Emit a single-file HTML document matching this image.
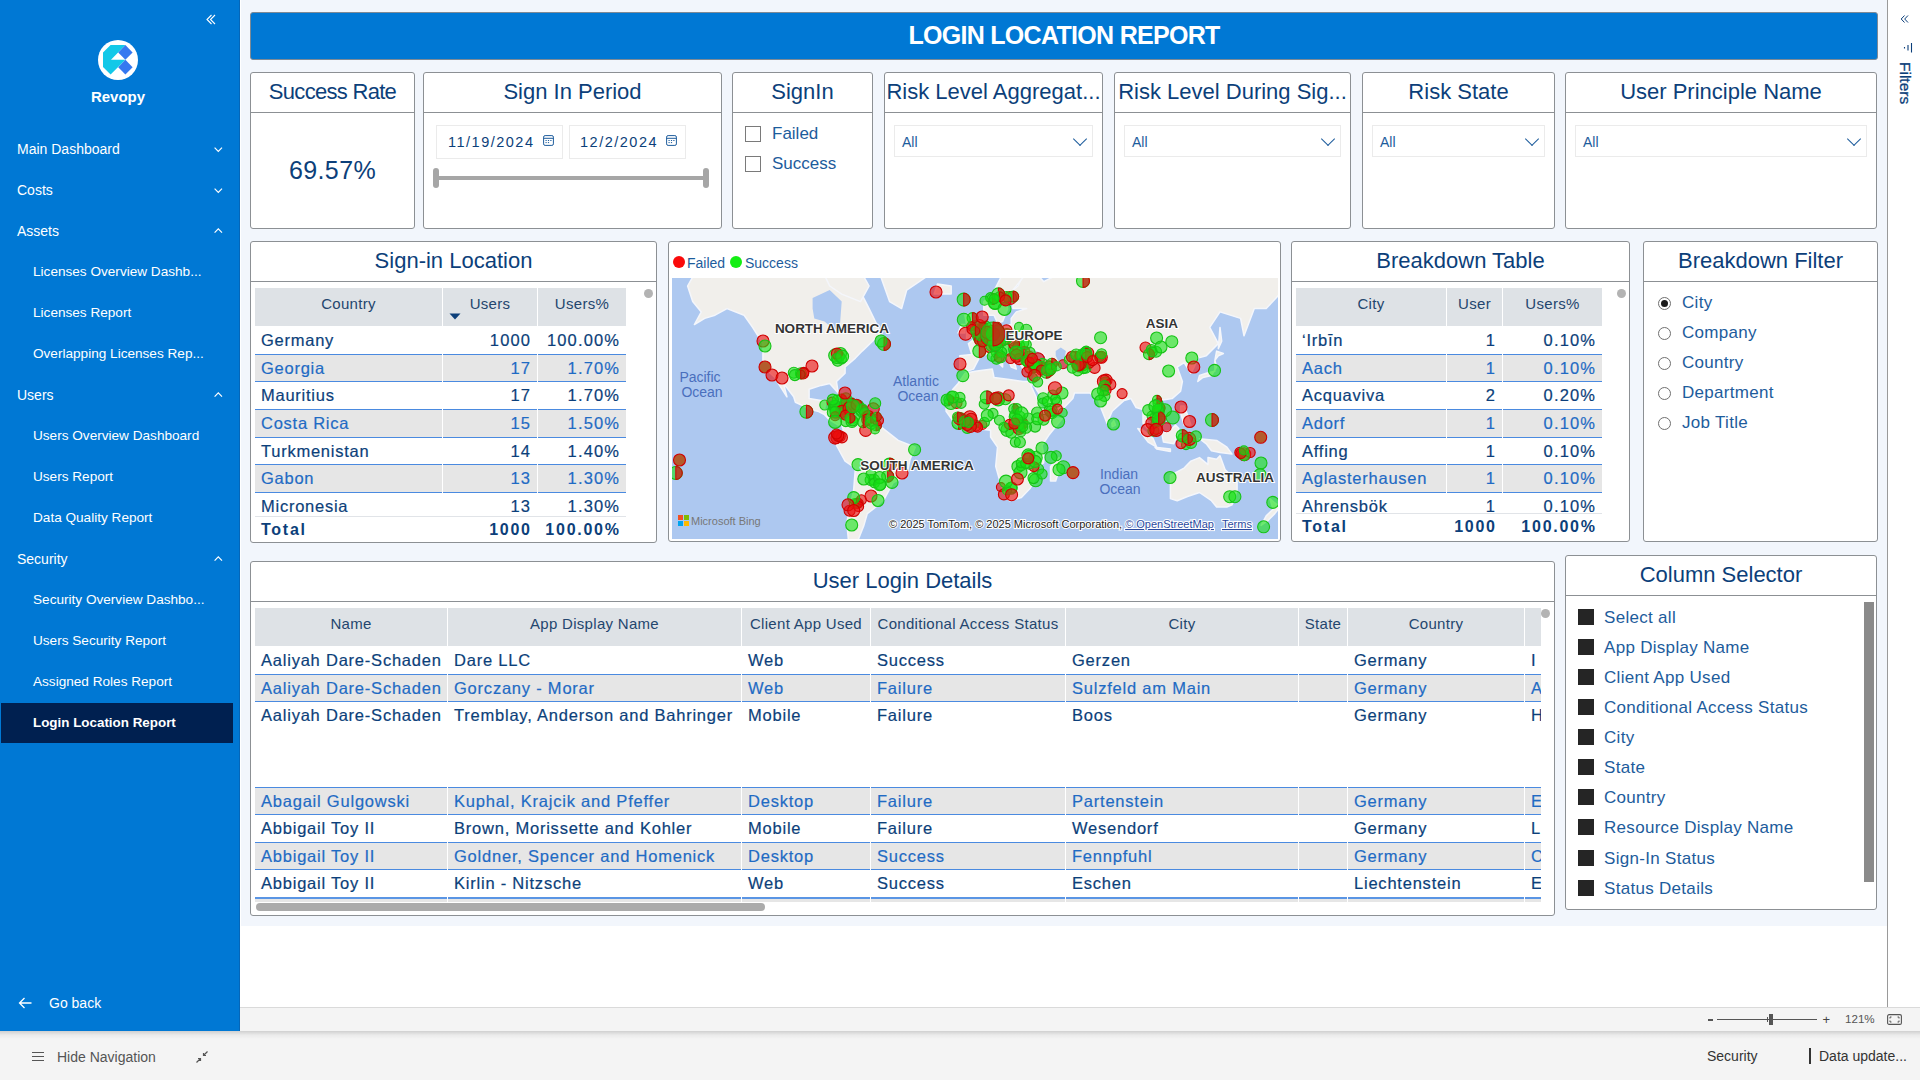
<!DOCTYPE html>
<html><head><meta charset="utf-8"><title>Login Location Report</title>
<style>
*{margin:0;padding:0;box-sizing:border-box}
html,body{width:1920px;height:1080px;overflow:hidden;background:#fff;font-family:"Liberation Sans",sans-serif}
.abs{position:absolute}
#side{position:absolute;left:0;top:0;width:240px;height:1031px;background:#0078d4;border-right:1px solid #0566b8}
.nav{position:absolute;left:17px;color:#fff;font-size:14px;line-height:20px;white-space:nowrap}
.nav.sub{left:33px;font-size:13.6px}
.chev{position:absolute;left:212px;width:7px;height:7px;border-right:1.4px solid #fff;border-bottom:1.4px solid #fff}
.chev.dn{transform:rotate(45deg)}
.chev.up{transform:rotate(-135deg)}
#canvas{position:absolute;left:241px;top:0;width:1646px;height:926px;background:#f2f6fc}
.card{position:absolute;background:#fff;border:1px solid #8c9094;border-radius:3px;overflow:hidden}
.ttl{position:absolute;left:0;right:0;text-align:center;color:#0c3f7a;font-size:22px;white-space:nowrap;border-bottom:1px solid #8c9094}
.tx{position:absolute;white-space:nowrap}
.tb{-webkit-text-stroke:0.2px currentColor}
.dd{position:absolute;border:1px solid #ebebeb;background:#fff}
.dd span{position:absolute;left:7px;top:8px;font-size:14px;color:#1d5c9c}
.ddc{position:absolute;width:10px;height:10px;border-right:1.3px solid #1d5c9c;border-bottom:1.3px solid #1d5c9c;transform:rotate(45deg)}
</style></head>
<body>
<div class="abs" style="left:240px;top:1007px;width:1680px;height:24px;background:#f4f4f4;border-top:1px solid #dadada"></div>
<div class="abs" style="left:0;top:1031px;width:1920px;height:49px;background:#f4f4f4"></div>
<div class="abs" style="left:0;top:1031px;width:1920px;height:8px;background:linear-gradient(rgba(0,0,0,0.15),rgba(0,0,0,0.04) 50%,rgba(0,0,0,0))"></div>
<div class="abs" style="left:1887px;top:0;width:1px;height:1007px;background:#9a9a9a"></div>
<svg class="abs" style="left:1900px;top:14px" width="9" height="10" viewBox="0 0 9 10"><path d="M4.5 1.5 L1.2 5 L4.5 8.5 M8 1.5 L4.7 5 L8 8.5" stroke="#0c3f7a" stroke-width="1" fill="none"/></svg>
<svg class="abs" style="left:1902px;top:42px" width="11" height="11" viewBox="0 0 11 11"><path d="M9.5 1 V10.5 M6 3 V8.5 M2.5 5 V6.5" stroke="#0c3f7a" stroke-width="1.1" fill="none"/></svg>
<div class="tx" style="left:1891.5px;top:62px;width:22px;height:50px;color:#0c3f7a;font-size:15.5px;writing-mode:vertical-rl;-webkit-text-stroke:0.3px #0c3f7a">Filters</div>
<div class="abs" style="left:1708px;top:1019px;width:5px;height:2px;background:#555"></div>
<div class="abs" style="left:1717px;top:1019px;width:100px;height:1px;background:#555"></div>
<div class="abs" style="left:1769px;top:1014px;width:4px;height:11px;background:#555"></div>
<div class="abs" style="left:1767px;top:1017px;width:1px;height:5px;background:#555"></div>
<div class="tx" style="left:1822.5px;top:1011.5px;font-size:13px;color:#444">+</div>
<div class="tx" style="left:1845px;top:1012px;font-size:11.6px;color:#555">121%</div>
<svg class="abs" style="left:1887px;top:1014px" width="15" height="11" viewBox="0 0 15 11"><rect x="0.6" y="0.6" width="13.8" height="9.8" rx="1.5" fill="none" stroke="#555" stroke-width="1.1"/><path d="M4.5 3 H3 V4.5 M10.5 3 H12 V4.5 M3 6.5 V8 H4.5 M12 6.5 V8 H10.5" stroke="#555" stroke-width="1" fill="none"/></svg>
<svg class="abs" style="left:31px;top:1051px" width="14" height="12" viewBox="0 0 14 12"><path d="M1 1.5 H13 M1 5.5 H13 M1 9.5 H13" stroke="#555" stroke-width="1"/></svg>
<div class="tx" style="left:57px;top:1049px;font-size:14px;color:#555">Hide Navigation</div>
<svg class="abs" style="left:195px;top:1050px" width="14" height="14" viewBox="0 0 14 14"><path d="M1.5 12.5 L5.5 8.5 M3 8.5 H5.5 V11 M12.5 1.5 L8.5 5.5 M8.5 3 V5.5 H11" stroke="#555" stroke-width="1.2" fill="none"/></svg>
<div class="tx" style="left:1707px;top:1048px;font-size:14px;color:#333">Security</div>
<div class="abs" style="left:1809px;top:1048px;width:1.5px;height:16px;background:#333"></div>
<div class="tx" style="left:1819px;top:1048px;font-size:14px;color:#333">Data update...</div>
<div id="canvas"></div>
<div id="side">
<svg class="abs" style="left:206px;top:14px" width="12" height="12" viewBox="0 0 12 12"><path d="M5.5 1 L1 5.5 L5.5 10 M9 1 L4.5 5.5 L9 10" stroke="#fff" stroke-width="1.1" fill="none"/></svg>
<svg class="abs" style="left:93px;top:35px" width="50" height="50" viewBox="0 0 50 50">
<circle cx="25" cy="25" r="20" fill="#fff"/>
<path d="M17.6 10 H32.4 L18 24.8 H32.4 L17.6 39.4 L10 31.9 V17.4 Z" fill="#12c8e8"/>
<path d="M32.4 10 L39.6 17.4 L32.4 24.8 L25.2 17.6 Z" fill="#3578f0"/>
<path d="M32.4 24.8 L39.6 32.2 L32.4 39.4 L25.2 32.2 Z" fill="#3578f0"/>
</svg>
<div class="tx" style="left:0;width:236px;top:88px;text-align:center;color:#fff;font-weight:bold;font-size:15px">Revopy</div>
<div class="nav" style="top:139px;">Main Dashboard</div>
<svg class="abs" style="left:214px;top:147px" width="9" height="6" viewBox="0 0 9 6"><path d="M0.6 0.6 L4.3 4.3 L8 0.6" stroke="#fff" stroke-width="1.2" fill="none"/></svg>
<div class="nav" style="top:180px;">Costs</div>
<svg class="abs" style="left:214px;top:188px" width="9" height="6" viewBox="0 0 9 6"><path d="M0.6 0.6 L4.3 4.3 L8 0.6" stroke="#fff" stroke-width="1.2" fill="none"/></svg>
<div class="nav" style="top:221px;">Assets</div>
<svg class="abs" style="left:214px;top:228px" width="9" height="6" viewBox="0 0 9 6"><path d="M0.6 4.6 L4.3 0.9 L8 4.6" stroke="#fff" stroke-width="1.2" fill="none"/></svg>
<div class="nav sub" style="top:262px;">Licenses Overview Dashb...</div>
<div class="nav sub" style="top:303px;">Licenses Report</div>
<div class="nav sub" style="top:344px;">Overlapping Licenses Rep...</div>
<div class="nav" style="top:385px;">Users</div>
<svg class="abs" style="left:214px;top:392px" width="9" height="6" viewBox="0 0 9 6"><path d="M0.6 4.6 L4.3 0.9 L8 4.6" stroke="#fff" stroke-width="1.2" fill="none"/></svg>
<div class="nav sub" style="top:426px;">Users Overview Dashboard</div>
<div class="nav sub" style="top:467px;">Users Report</div>
<div class="nav sub" style="top:508px;">Data Quality Report</div>
<div class="nav" style="top:549px;">Security</div>
<svg class="abs" style="left:214px;top:556px" width="9" height="6" viewBox="0 0 9 6"><path d="M0.6 4.6 L4.3 0.9 L8 4.6" stroke="#fff" stroke-width="1.2" fill="none"/></svg>
<div class="nav sub" style="top:590px;">Security Overview Dashbo...</div>
<div class="nav sub" style="top:631px;">Users Security Report</div>
<div class="nav sub" style="top:672px;">Assigned Roles Report</div>
<div class="abs" style="left:1px;top:703px;width:232px;height:40px;background:#002050"></div>
<div class="nav sub" style="top:713px;font-weight:bold;font-size:13.4px;">Login Location Report</div>
<svg class="abs" style="left:18px;top:997px" width="14" height="12" viewBox="0 0 14 12"><path d="M13.5 6 H1.5 M6.5 1 L1.5 6 L6.5 11" stroke="#fff" stroke-width="1.3" fill="none"/></svg>
<div class="nav" style="left:49px;top:993px">Go back</div>
</div>
<div class="abs" style="left:250px;top:12px;width:1628px;height:48px;background:#0078d4;border:1px solid #7d8a96;border-radius:3px"></div>
<div class="tx" style="left:250px;width:1628px;top:19px;text-align:center;color:#fff;font-weight:bold;font-size:25px;line-height:32px;letter-spacing:-0.7px">LOGIN LOCATION REPORT</div>
<div class="card" style="left:250px;top:72px;width:165px;height:157px;"><div class="ttl" style="top:0;height:40px;line-height:38px;letter-spacing:-0.7px">Success Rate</div>
<div class="tx" style="left:0;right:0;top:82px;text-align:center;color:#0c3f7a;font-size:25px;line-height:30px;letter-spacing:0.4px">69.57%</div>
</div>
<div class="card" style="left:423px;top:72px;width:299px;height:157px;"><div class="ttl" style="top:0;height:40px;line-height:38px;">Sign In Period</div>
<div class="dd" style="left:12px;top:52px;width:127px;height:34px"><span style="left:11px;top:8px;font-size:14.5px;color:#0c3f7a;letter-spacing:1.5px">11/19/2024</span><svg class="abs" style="left:106px;top:9px" width="11" height="11" viewBox="0 0 11 11"><rect x="0.6" y="0.6" width="9.8" height="9.8" rx="1.5" fill="none" stroke="#1d5c9c" stroke-width="1"/><path d="M0.6 3.3 H10.4" stroke="#1d5c9c" stroke-width="1"/><path d="M2.5 5.5h1.2M4.9 5.5h1.2M7.3 5.5h1.2M2.5 7.6h1.2M4.9 7.6h1.2" stroke="#1d5c9c" stroke-width="1"/></svg></div>
<div class="dd" style="left:145px;top:52px;width:117px;height:34px"><span style="left:10px;top:8px;font-size:14.5px;color:#0c3f7a;letter-spacing:1.5px">12/2/2024</span><svg class="abs" style="left:96px;top:9px" width="11" height="11" viewBox="0 0 11 11"><rect x="0.6" y="0.6" width="9.8" height="9.8" rx="1.5" fill="none" stroke="#1d5c9c" stroke-width="1"/><path d="M0.6 3.3 H10.4" stroke="#1d5c9c" stroke-width="1"/><path d="M2.5 5.5h1.2M4.9 5.5h1.2M7.3 5.5h1.2M2.5 7.6h1.2M4.9 7.6h1.2" stroke="#1d5c9c" stroke-width="1"/></svg></div>
<div class="abs" style="left:12px;top:103px;width:272px;height:3.5px;background:#a6a6a6;border-radius:2px"></div>
<div class="abs" style="left:9px;top:95px;width:6px;height:20px;background:#a6a6a6;border-radius:3px"></div>
<div class="abs" style="left:279px;top:95px;width:6px;height:20px;background:#a6a6a6;border-radius:3px"></div>
</div>
<div class="card" style="left:732px;top:72px;width:141px;height:157px;"><div class="ttl" style="top:0;height:40px;line-height:38px;">SignIn</div>
<div class="abs" style="left:12px;top:53px;width:16px;height:16px;border:1px solid #7a7a7a"></div>
<div class="tx" style="left:39px;top:50px;font-size:17px;line-height:22px;color:#1d5c9c">Failed</div>
<div class="abs" style="left:12px;top:83px;width:16px;height:16px;border:1px solid #7a7a7a"></div>
<div class="tx" style="left:39px;top:80px;font-size:17px;line-height:22px;color:#1d5c9c">Success</div>
</div>
<div class="card" style="left:884px;top:72px;width:219px;height:157px;"><div class="ttl" style="top:0;height:40px;line-height:38px;">Risk Level Aggregat...</div>
<div class="dd" style="left:9px;top:52px;width:199px;height:32px"><span>All</span><div class="ddc" style="left:180px;top:8px"></div></div>
</div>
<div class="card" style="left:1114px;top:72px;width:237px;height:157px;"><div class="ttl" style="top:0;height:40px;line-height:38px;">Risk Level During Sig...</div>
<div class="dd" style="left:9px;top:52px;width:217px;height:32px"><span>All</span><div class="ddc" style="left:198px;top:8px"></div></div>
</div>
<div class="card" style="left:1362px;top:72px;width:193px;height:157px;"><div class="ttl" style="top:0;height:40px;line-height:38px;">Risk State</div>
<div class="dd" style="left:9px;top:52px;width:173px;height:32px"><span>All</span><div class="ddc" style="left:154px;top:8px"></div></div>
</div>
<div class="card" style="left:1565px;top:72px;width:312px;height:157px;"><div class="ttl" style="top:0;height:40px;line-height:38px;">User Principle Name</div>
<div class="dd" style="left:9px;top:52px;width:292px;height:32px"><span>All</span><div class="ddc" style="left:273px;top:8px"></div></div>
</div>
<div class="card" style="left:250px;top:241px;width:407px;height:302px;"><div class="ttl" style="top:0;height:40px;line-height:38px;">Sign-in Location</div>
</div>
<div class="abs" style="left:255px;top:288px;width:187px;height:38px;background:#dee2e6"></div>
<div class="tx" style="left:255px;width:187px;top:294px;line-height:20px;text-align:center;font-size:15px;color:#24466e;letter-spacing:0.3px">Country</div>
<div class="abs" style="left:443px;top:288px;width:94px;height:38px;background:#dee2e6"></div>
<div class="tx" style="left:443px;width:94px;top:294px;line-height:20px;text-align:center;font-size:15px;color:#24466e;letter-spacing:0.3px">Users</div>
<div class="abs" style="left:538px;top:288px;width:88px;height:38px;background:#dee2e6"></div>
<div class="tx" style="left:538px;width:88px;top:294px;line-height:20px;text-align:center;font-size:15px;color:#24466e;letter-spacing:0.3px">Users%</div>
<div class="abs" style="left:255px;top:326px;width:371px;height:190px;overflow:hidden">
<div class="abs" style="left:0px;top:0px;width:187px;height:29px;background:#fff;border-top:1px solid transparent;"></div>
<div class="abs" style="left:188px;top:0px;width:94px;height:29px;background:#fff;border-top:1px solid transparent;"></div>
<div class="abs" style="left:283px;top:0px;width:88px;height:29px;background:#fff;border-top:1px solid transparent;"></div>
<div class="tx tb" style="left:6px;top:3px;line-height:22px;font-size:16.5px;color:#0c3f7a;letter-spacing:0.75px">Germany</div>
<div class="tx tb" style="left:188px;width:88.15px;top:3px;line-height:22px;text-align:right;font-size:16.5px;color:#0c3f7a;letter-spacing:1.15px">1000</div>
<div class="tx tb" style="left:283px;width:82.15px;top:3px;line-height:22px;text-align:right;font-size:16.5px;color:#0c3f7a;letter-spacing:1.15px">100.00%</div>
<div class="abs" style="left:0px;top:28px;width:187px;height:28px;background:#e6e6e6;border-top:1px solid #4a8ae0;border-bottom:1px solid #4a8ae0"></div>
<div class="abs" style="left:188px;top:28px;width:94px;height:28px;background:#e6e6e6;border-top:1px solid #4a8ae0;border-bottom:1px solid #4a8ae0"></div>
<div class="abs" style="left:283px;top:28px;width:88px;height:28px;background:#e6e6e6;border-top:1px solid #4a8ae0;border-bottom:1px solid #4a8ae0"></div>
<div class="tx tb" style="left:6px;top:31px;line-height:22px;font-size:16.5px;color:#1f6bc4;letter-spacing:0.75px">Georgia</div>
<div class="tx tb" style="left:188px;width:88.15px;top:31px;line-height:22px;text-align:right;font-size:16.5px;color:#1f6bc4;letter-spacing:1.15px">17</div>
<div class="tx tb" style="left:283px;width:82.15px;top:31px;line-height:22px;text-align:right;font-size:16.5px;color:#1f6bc4;letter-spacing:1.15px">1.70%</div>
<div class="abs" style="left:0px;top:55px;width:187px;height:29px;background:#fff;border-top:1px solid #4a8ae0;"></div>
<div class="abs" style="left:188px;top:55px;width:94px;height:29px;background:#fff;border-top:1px solid #4a8ae0;"></div>
<div class="abs" style="left:283px;top:55px;width:88px;height:29px;background:#fff;border-top:1px solid #4a8ae0;"></div>
<div class="tx tb" style="left:6px;top:58px;line-height:22px;font-size:16.5px;color:#0c3f7a;letter-spacing:0.75px">Mauritius</div>
<div class="tx tb" style="left:188px;width:88.15px;top:58px;line-height:22px;text-align:right;font-size:16.5px;color:#0c3f7a;letter-spacing:1.15px">17</div>
<div class="tx tb" style="left:283px;width:82.15px;top:58px;line-height:22px;text-align:right;font-size:16.5px;color:#0c3f7a;letter-spacing:1.15px">1.70%</div>
<div class="abs" style="left:0px;top:83px;width:187px;height:29px;background:#e6e6e6;border-top:1px solid #4a8ae0;border-bottom:1px solid #4a8ae0"></div>
<div class="abs" style="left:188px;top:83px;width:94px;height:29px;background:#e6e6e6;border-top:1px solid #4a8ae0;border-bottom:1px solid #4a8ae0"></div>
<div class="abs" style="left:283px;top:83px;width:88px;height:29px;background:#e6e6e6;border-top:1px solid #4a8ae0;border-bottom:1px solid #4a8ae0"></div>
<div class="tx tb" style="left:6px;top:86px;line-height:22px;font-size:16.5px;color:#1f6bc4;letter-spacing:0.75px">Costa Rica</div>
<div class="tx tb" style="left:188px;width:88.15px;top:86px;line-height:22px;text-align:right;font-size:16.5px;color:#1f6bc4;letter-spacing:1.15px">15</div>
<div class="tx tb" style="left:283px;width:82.15px;top:86px;line-height:22px;text-align:right;font-size:16.5px;color:#1f6bc4;letter-spacing:1.15px">1.50%</div>
<div class="abs" style="left:0px;top:111px;width:187px;height:28px;background:#fff;border-top:1px solid #4a8ae0;"></div>
<div class="abs" style="left:188px;top:111px;width:94px;height:28px;background:#fff;border-top:1px solid #4a8ae0;"></div>
<div class="abs" style="left:283px;top:111px;width:88px;height:28px;background:#fff;border-top:1px solid #4a8ae0;"></div>
<div class="tx tb" style="left:6px;top:114px;line-height:22px;font-size:16.5px;color:#0c3f7a;letter-spacing:0.75px">Turkmenistan</div>
<div class="tx tb" style="left:188px;width:88.15px;top:114px;line-height:22px;text-align:right;font-size:16.5px;color:#0c3f7a;letter-spacing:1.15px">14</div>
<div class="tx tb" style="left:283px;width:82.15px;top:114px;line-height:22px;text-align:right;font-size:16.5px;color:#0c3f7a;letter-spacing:1.15px">1.40%</div>
<div class="abs" style="left:0px;top:138px;width:187px;height:29px;background:#e6e6e6;border-top:1px solid #4a8ae0;border-bottom:1px solid #4a8ae0"></div>
<div class="abs" style="left:188px;top:138px;width:94px;height:29px;background:#e6e6e6;border-top:1px solid #4a8ae0;border-bottom:1px solid #4a8ae0"></div>
<div class="abs" style="left:283px;top:138px;width:88px;height:29px;background:#e6e6e6;border-top:1px solid #4a8ae0;border-bottom:1px solid #4a8ae0"></div>
<div class="tx tb" style="left:6px;top:141px;line-height:22px;font-size:16.5px;color:#1f6bc4;letter-spacing:0.75px">Gabon</div>
<div class="tx tb" style="left:188px;width:88.15px;top:141px;line-height:22px;text-align:right;font-size:16.5px;color:#1f6bc4;letter-spacing:1.15px">13</div>
<div class="tx tb" style="left:283px;width:82.15px;top:141px;line-height:22px;text-align:right;font-size:16.5px;color:#1f6bc4;letter-spacing:1.15px">1.30%</div>
<div class="abs" style="left:0px;top:166px;width:187px;height:29px;background:#fff;border-top:1px solid #4a8ae0;"></div>
<div class="abs" style="left:188px;top:166px;width:94px;height:29px;background:#fff;border-top:1px solid #4a8ae0;"></div>
<div class="abs" style="left:283px;top:166px;width:88px;height:29px;background:#fff;border-top:1px solid #4a8ae0;"></div>
<div class="tx tb" style="left:6px;top:169px;line-height:22px;font-size:16.5px;color:#0c3f7a;letter-spacing:0.75px">Micronesia</div>
<div class="tx tb" style="left:188px;width:88.15px;top:169px;line-height:22px;text-align:right;font-size:16.5px;color:#0c3f7a;letter-spacing:1.15px">13</div>
<div class="tx tb" style="left:283px;width:82.15px;top:169px;line-height:22px;text-align:right;font-size:16.5px;color:#0c3f7a;letter-spacing:1.15px">1.30%</div>
<div class="abs" style="left:0px;top:194px;width:187px;height:29px;background:#e6e6e6;border-top:1px solid #4a8ae0;border-bottom:1px solid #4a8ae0"></div>
<div class="abs" style="left:188px;top:194px;width:94px;height:29px;background:#e6e6e6;border-top:1px solid #4a8ae0;border-bottom:1px solid #4a8ae0"></div>
<div class="abs" style="left:283px;top:194px;width:88px;height:29px;background:#e6e6e6;border-top:1px solid #4a8ae0;border-bottom:1px solid #4a8ae0"></div>
<div class="tx tb" style="left:6px;top:197px;line-height:22px;font-size:16.5px;color:#1f6bc4;letter-spacing:0.75px">Nauru</div>
<div class="tx tb" style="left:188px;width:88.15px;top:197px;line-height:22px;text-align:right;font-size:16.5px;color:#1f6bc4;letter-spacing:1.15px">12</div>
<div class="tx tb" style="left:283px;width:82.15px;top:197px;line-height:22px;text-align:right;font-size:16.5px;color:#1f6bc4;letter-spacing:1.15px">1.20%</div>
</div>
<div class="abs" style="left:255px;top:516px;width:371px;height:1px;background:#e1e4e8"></div>
<div class="tx" style="left:261px;top:519px;line-height:22px;font-size:16.0px;font-weight:bold;color:#0c3f7a;letter-spacing:1.75px">Total</div>
<div class="tx" style="left:443px;width:88.75px;top:519px;line-height:22px;text-align:right;font-size:16.0px;font-weight:bold;color:#0c3f7a;letter-spacing:1.75px">1000</div>
<div class="tx" style="left:538px;width:82.75px;top:519px;line-height:22px;text-align:right;font-size:16.0px;font-weight:bold;color:#0c3f7a;letter-spacing:1.75px">100.00%</div>
<svg class="abs" style="left:449px;top:313px" width="12" height="7" viewBox="0 0 12 7"><path d="M0.5 0.5 H11.5 L6 6.5 Z" fill="#0c3f7a"/></svg>
<div class="abs" style="left:644px;top:289px;width:9px;height:9px;border-radius:50%;background:#b3b3b3"></div>
<div class="card" style="left:1291px;top:241px;width:339px;height:301px;"><div class="ttl" style="top:0;height:40px;line-height:38px;">Breakdown Table</div>
</div>
<div class="abs" style="left:1296px;top:288px;width:150px;height:38px;background:#dee2e6"></div>
<div class="tx" style="left:1296px;width:150px;top:294px;line-height:20px;text-align:center;font-size:15px;color:#24466e;letter-spacing:0.3px">City</div>
<div class="abs" style="left:1447px;top:288px;width:55px;height:38px;background:#dee2e6"></div>
<div class="tx" style="left:1447px;width:55px;top:294px;line-height:20px;text-align:center;font-size:15px;color:#24466e;letter-spacing:0.3px">User</div>
<div class="abs" style="left:1503px;top:288px;width:99px;height:38px;background:#dee2e6"></div>
<div class="tx" style="left:1503px;width:99px;top:294px;line-height:20px;text-align:center;font-size:15px;color:#24466e;letter-spacing:0.3px">Users%</div>
<div class="abs" style="left:1296px;top:326px;width:306px;height:187px;overflow:hidden">
<div class="abs" style="left:0px;top:0px;width:150px;height:29px;background:#fff;border-top:1px solid transparent;"></div>
<div class="abs" style="left:151px;top:0px;width:55px;height:29px;background:#fff;border-top:1px solid transparent;"></div>
<div class="abs" style="left:207px;top:0px;width:99px;height:29px;background:#fff;border-top:1px solid transparent;"></div>
<div class="tx tb" style="left:6px;top:3px;line-height:22px;font-size:16.5px;color:#0c3f7a;letter-spacing:0.75px">ʻIrbīn</div>
<div class="tx tb" style="left:151px;width:49.15px;top:3px;line-height:22px;text-align:right;font-size:16.5px;color:#0c3f7a;letter-spacing:1.15px">1</div>
<div class="tx tb" style="left:207px;width:93.15px;top:3px;line-height:22px;text-align:right;font-size:16.5px;color:#0c3f7a;letter-spacing:1.15px">0.10%</div>
<div class="abs" style="left:0px;top:28px;width:150px;height:28px;background:#e6e6e6;border-top:1px solid #4a8ae0;border-bottom:1px solid #4a8ae0"></div>
<div class="abs" style="left:151px;top:28px;width:55px;height:28px;background:#e6e6e6;border-top:1px solid #4a8ae0;border-bottom:1px solid #4a8ae0"></div>
<div class="abs" style="left:207px;top:28px;width:99px;height:28px;background:#e6e6e6;border-top:1px solid #4a8ae0;border-bottom:1px solid #4a8ae0"></div>
<div class="tx tb" style="left:6px;top:31px;line-height:22px;font-size:16.5px;color:#1f6bc4;letter-spacing:0.75px">Aach</div>
<div class="tx tb" style="left:151px;width:49.15px;top:31px;line-height:22px;text-align:right;font-size:16.5px;color:#1f6bc4;letter-spacing:1.15px">1</div>
<div class="tx tb" style="left:207px;width:93.15px;top:31px;line-height:22px;text-align:right;font-size:16.5px;color:#1f6bc4;letter-spacing:1.15px">0.10%</div>
<div class="abs" style="left:0px;top:55px;width:150px;height:29px;background:#fff;border-top:1px solid #4a8ae0;"></div>
<div class="abs" style="left:151px;top:55px;width:55px;height:29px;background:#fff;border-top:1px solid #4a8ae0;"></div>
<div class="abs" style="left:207px;top:55px;width:99px;height:29px;background:#fff;border-top:1px solid #4a8ae0;"></div>
<div class="tx tb" style="left:6px;top:58px;line-height:22px;font-size:16.5px;color:#0c3f7a;letter-spacing:0.75px">Acquaviva</div>
<div class="tx tb" style="left:151px;width:49.15px;top:58px;line-height:22px;text-align:right;font-size:16.5px;color:#0c3f7a;letter-spacing:1.15px">2</div>
<div class="tx tb" style="left:207px;width:93.15px;top:58px;line-height:22px;text-align:right;font-size:16.5px;color:#0c3f7a;letter-spacing:1.15px">0.20%</div>
<div class="abs" style="left:0px;top:83px;width:150px;height:29px;background:#e6e6e6;border-top:1px solid #4a8ae0;border-bottom:1px solid #4a8ae0"></div>
<div class="abs" style="left:151px;top:83px;width:55px;height:29px;background:#e6e6e6;border-top:1px solid #4a8ae0;border-bottom:1px solid #4a8ae0"></div>
<div class="abs" style="left:207px;top:83px;width:99px;height:29px;background:#e6e6e6;border-top:1px solid #4a8ae0;border-bottom:1px solid #4a8ae0"></div>
<div class="tx tb" style="left:6px;top:86px;line-height:22px;font-size:16.5px;color:#1f6bc4;letter-spacing:0.75px">Adorf</div>
<div class="tx tb" style="left:151px;width:49.15px;top:86px;line-height:22px;text-align:right;font-size:16.5px;color:#1f6bc4;letter-spacing:1.15px">1</div>
<div class="tx tb" style="left:207px;width:93.15px;top:86px;line-height:22px;text-align:right;font-size:16.5px;color:#1f6bc4;letter-spacing:1.15px">0.10%</div>
<div class="abs" style="left:0px;top:111px;width:150px;height:28px;background:#fff;border-top:1px solid #4a8ae0;"></div>
<div class="abs" style="left:151px;top:111px;width:55px;height:28px;background:#fff;border-top:1px solid #4a8ae0;"></div>
<div class="abs" style="left:207px;top:111px;width:99px;height:28px;background:#fff;border-top:1px solid #4a8ae0;"></div>
<div class="tx tb" style="left:6px;top:114px;line-height:22px;font-size:16.5px;color:#0c3f7a;letter-spacing:0.75px">Affing</div>
<div class="tx tb" style="left:151px;width:49.15px;top:114px;line-height:22px;text-align:right;font-size:16.5px;color:#0c3f7a;letter-spacing:1.15px">1</div>
<div class="tx tb" style="left:207px;width:93.15px;top:114px;line-height:22px;text-align:right;font-size:16.5px;color:#0c3f7a;letter-spacing:1.15px">0.10%</div>
<div class="abs" style="left:0px;top:138px;width:150px;height:29px;background:#e6e6e6;border-top:1px solid #4a8ae0;border-bottom:1px solid #4a8ae0"></div>
<div class="abs" style="left:151px;top:138px;width:55px;height:29px;background:#e6e6e6;border-top:1px solid #4a8ae0;border-bottom:1px solid #4a8ae0"></div>
<div class="abs" style="left:207px;top:138px;width:99px;height:29px;background:#e6e6e6;border-top:1px solid #4a8ae0;border-bottom:1px solid #4a8ae0"></div>
<div class="tx tb" style="left:6px;top:141px;line-height:22px;font-size:16.5px;color:#1f6bc4;letter-spacing:0.75px">Aglasterhausen</div>
<div class="tx tb" style="left:151px;width:49.15px;top:141px;line-height:22px;text-align:right;font-size:16.5px;color:#1f6bc4;letter-spacing:1.15px">1</div>
<div class="tx tb" style="left:207px;width:93.15px;top:141px;line-height:22px;text-align:right;font-size:16.5px;color:#1f6bc4;letter-spacing:1.15px">0.10%</div>
<div class="abs" style="left:0px;top:166px;width:150px;height:29px;background:#fff;border-top:1px solid #4a8ae0;"></div>
<div class="abs" style="left:151px;top:166px;width:55px;height:29px;background:#fff;border-top:1px solid #4a8ae0;"></div>
<div class="abs" style="left:207px;top:166px;width:99px;height:29px;background:#fff;border-top:1px solid #4a8ae0;"></div>
<div class="tx tb" style="left:6px;top:169px;line-height:22px;font-size:16.5px;color:#0c3f7a;letter-spacing:0.75px">Ahrensbök</div>
<div class="tx tb" style="left:151px;width:49.15px;top:169px;line-height:22px;text-align:right;font-size:16.5px;color:#0c3f7a;letter-spacing:1.15px">1</div>
<div class="tx tb" style="left:207px;width:93.15px;top:169px;line-height:22px;text-align:right;font-size:16.5px;color:#0c3f7a;letter-spacing:1.15px">0.10%</div>
<div class="abs" style="left:0px;top:194px;width:150px;height:29px;background:#e6e6e6;border-top:1px solid #4a8ae0;border-bottom:1px solid #4a8ae0"></div>
<div class="abs" style="left:151px;top:194px;width:55px;height:29px;background:#e6e6e6;border-top:1px solid #4a8ae0;border-bottom:1px solid #4a8ae0"></div>
<div class="abs" style="left:207px;top:194px;width:99px;height:29px;background:#e6e6e6;border-top:1px solid #4a8ae0;border-bottom:1px solid #4a8ae0"></div>
<div class="tx tb" style="left:6px;top:197px;line-height:22px;font-size:16.5px;color:#1f6bc4;letter-spacing:0.75px">Ahrensburg</div>
<div class="tx tb" style="left:151px;width:49.15px;top:197px;line-height:22px;text-align:right;font-size:16.5px;color:#1f6bc4;letter-spacing:1.15px">1</div>
<div class="tx tb" style="left:207px;width:93.15px;top:197px;line-height:22px;text-align:right;font-size:16.5px;color:#1f6bc4;letter-spacing:1.15px">0.10%</div>
</div>
<div class="abs" style="left:1296px;top:513px;width:306px;height:1px;background:#e1e4e8"></div>
<div class="tx" style="left:1302px;top:516px;line-height:22px;font-size:16.0px;font-weight:bold;color:#0c3f7a;letter-spacing:1.75px">Total</div>
<div class="tx" style="left:1447px;width:49.75px;top:516px;line-height:22px;text-align:right;font-size:16.0px;font-weight:bold;color:#0c3f7a;letter-spacing:1.75px">1000</div>
<div class="tx" style="left:1503px;width:93.75px;top:516px;line-height:22px;text-align:right;font-size:16.0px;font-weight:bold;color:#0c3f7a;letter-spacing:1.75px">100.00%</div>
<div class="abs" style="left:1617px;top:289px;width:9px;height:9px;border-radius:50%;background:#b3b3b3"></div>
<div class="card" style="left:1643px;top:241px;width:235px;height:301px;"><div class="ttl" style="top:0;height:40px;line-height:38px;">Breakdown Filter</div>
<div class="abs" style="left:14px;top:55px;width:13px;height:13px;border-radius:50%;border:1px solid #6f6f6f;background:#fff"></div>
<div class="abs" style="left:17px;top:58px;width:7px;height:7px;border-radius:50%;background:#1b1b1b"></div>
<div class="tx" style="left:38px;top:50px;line-height:22px;font-size:17px;color:#1d5c9c;letter-spacing:0.3px">City</div>
<div class="abs" style="left:14px;top:85px;width:13px;height:13px;border-radius:50%;border:1px solid #6f6f6f;background:#fff"></div>
<div class="tx" style="left:38px;top:80px;line-height:22px;font-size:17px;color:#1d5c9c;letter-spacing:0.3px">Company</div>
<div class="abs" style="left:14px;top:115px;width:13px;height:13px;border-radius:50%;border:1px solid #6f6f6f;background:#fff"></div>
<div class="tx" style="left:38px;top:110px;line-height:22px;font-size:17px;color:#1d5c9c;letter-spacing:0.3px">Country</div>
<div class="abs" style="left:14px;top:145px;width:13px;height:13px;border-radius:50%;border:1px solid #6f6f6f;background:#fff"></div>
<div class="tx" style="left:38px;top:140px;line-height:22px;font-size:17px;color:#1d5c9c;letter-spacing:0.3px">Department</div>
<div class="abs" style="left:14px;top:175px;width:13px;height:13px;border-radius:50%;border:1px solid #6f6f6f;background:#fff"></div>
<div class="tx" style="left:38px;top:170px;line-height:22px;font-size:17px;color:#1d5c9c;letter-spacing:0.3px">Job Title</div>
</div>
<div class="card" style="left:668px;top:241px;width:613px;height:301px"></div>
<div class="abs" style="left:673px;top:256px;width:12px;height:12px;border-radius:50%;background:#fa0a0a"></div>
<div class="tx" style="left:687px;top:254px;font-size:14px;line-height:18px;color:#1d5c9c">Failed</div>
<div class="abs" style="left:730px;top:256px;width:12px;height:12px;border-radius:50%;background:#14ee14"></div>
<div class="tx" style="left:745px;top:254px;font-size:14px;line-height:18px;color:#1d5c9c">Success</div>
<svg class="abs" style="left:672px;top:278px" width="606" height="261" viewBox="0 0 606 261">
<rect width="606" height="261" fill="#adc8f0"/>
<polygon points="15.6,8.0 25.9,-10.2 36.1,-17.9 63.5,-10.2 84.1,-10.2 106.3,-0.7 140.6,-20.7 166.2,-26.3 183.4,3.7 197.1,30.6 209.0,55.0 190.2,73.1 183.4,80.1 173.1,89.0 173.1,95.3 164.5,103.5 166.2,115.0 162.8,111.3 157.7,105.4 149.1,107.4 137.1,111.3 137.1,120.6 149.1,122.4 154.3,122.4 152.5,131.4 161.1,133.2 161.1,141.9 168.0,143.6 171.4,145.3 166.2,147.1 157.7,141.9 152.5,136.7 145.7,133.2 138.8,131.4 123.4,124.3 121.7,118.8 111.5,105.4 114.9,118.8 106.3,105.4 102.9,99.5 96.0,93.3 90.9,84.6 90.9,65.6 80.6,49.4 72.1,37.2 55.0,30.6 43.0,37.2 32.7,40.4 22.4,46.5 29.3,33.9 20.7,23.6" fill="#f1efeb" stroke="#f4f6fb" stroke-width="1.5" stroke-linejoin="round"/>
<polygon points="178.2,-60.6 200.5,-100.4 251.8,-113.4 269.0,-78.5 269.0,-26.3 260.4,-5.3 234.7,12.1 229.6,30.6 217.6,23.6 209.0,-0.7 203.9,-38.7" fill="#f1efeb" stroke="#f4f6fb" stroke-width="1.5" stroke-linejoin="round"/>
<polygon points="149.1,-10.2 166.2,-26.3 186.8,-10.2 197.1,8.0 188.5,23.6 169.7,16.1 157.7,8.0" fill="#f1efeb" stroke="#f4f6fb" stroke-width="1.5" stroke-linejoin="round"/>
<polygon points="166.2,143.6 174.8,140.2 179.9,138.4 197.1,140.2 209.0,148.8 217.6,155.6 226.2,162.4 243.3,169.2 238.1,181.3 234.7,197.4 221.0,204.8 212.5,220.6 203.9,229.0 195.3,235.6 191.9,247.4 186.8,260.2 183.4,271.5 176.5,263.0 174.8,244.9 178.2,226.9 181.6,212.6 183.4,190.1 173.1,183.1 164.5,167.5 166.2,159.0 171.4,152.2 169.7,147.1" fill="#f1efeb" stroke="#f4f6fb" stroke-width="1.5" stroke-linejoin="round"/>
<polygon points="287.8,91.1 287.8,77.8 299.8,76.6 296.4,65.6 306.6,57.8 311.8,52.3 316.9,49.4 327.2,49.4 339.2,46.5 339.2,40.4 344.3,33.9 354.6,30.6 340.9,30.6 340.9,12.1 346.0,8.0 354.6,-10.2 359.7,-10.2 371.7,3.7 380.2,-0.7 397.4,-5.3 405.9,-10.2 423.0,-26.3 440.2,-26.3 457.3,-45.5 483.0,-60.6 500.1,-32.3 525.8,-20.7 546.3,-26.3 568.6,-15.3 594.2,-10.2 611.4,-0.7 611.4,12.1 594.2,30.6 582.3,30.6 572.0,57.8 568.6,40.4 548.0,33.9 537.7,49.4 546.3,65.6 534.3,77.8 525.8,80.1 522.3,89.0 518.9,95.3 512.1,84.6 505.2,89.0 510.4,103.5 508.6,113.2 500.1,120.6 488.1,122.4 484.7,129.6 489.8,138.4 483.0,143.6 474.4,136.7 476.1,153.9 481.2,157.3 471.0,145.3 471.0,131.4 464.1,129.6 459.0,120.6 452.1,122.4 440.2,133.2 435.0,145.3 428.2,127.9 426.5,122.4 417.9,115.0 402.5,115.0 400.8,120.6 392.2,129.6 378.5,138.4 376.8,129.6 370.0,120.6 363.1,109.3 359.7,105.4 363.1,95.3 351.1,91.1 347.7,84.6 352.8,82.4 359.7,81.2 373.4,82.4 373.4,77.8 366.5,73.1 356.3,70.6 352.8,73.1 351.1,80.1 342.6,84.6 344.3,91.1 339.2,89.0 335.7,80.1 327.2,73.1 323.7,75.5 330.6,84.6 330.6,89.0 322.0,80.1 316.9,75.5 308.3,77.8 301.5,91.1 294.6,93.3" fill="#f1efeb" stroke="#f4f6fb" stroke-width="1.5" stroke-linejoin="round"/>
<polygon points="311.8,37.2 311.8,23.6 320.3,16.1 328.9,-0.7 334.0,-10.2 347.7,-15.3 354.6,-10.2 351.1,-0.7 344.3,8.0 340.9,12.1 334.0,23.6 335.7,30.6 330.6,43.5 325.5,45.0 322.0,37.2 316.9,37.2" fill="#f1efeb" stroke="#f4f6fb" stroke-width="1.5" stroke-linejoin="round"/>
<polygon points="274.1,122.4 274.1,133.2 282.7,145.3 289.5,151.3 303.2,150.5 318.6,152.2 318.6,159.0 325.5,169.2 323.7,188.4 328.9,206.7 334.0,218.5 337.4,222.7 349.4,219.6 358.0,210.6 363.1,201.1 363.1,190.1 371.7,184.8 371.7,176.1 370.0,167.5 376.8,157.3 390.5,140.2 378.5,140.2 375.1,134.9 370.0,129.6 366.5,124.3 359.7,109.3 358.0,103.5 351.1,103.5 337.4,101.5 322.0,99.5 320.3,91.1 303.2,93.3 292.9,95.3 286.1,105.4 280.9,111.3" fill="#f1efeb" stroke="#f4f6fb" stroke-width="1.5" stroke-linejoin="round"/>
<polygon points="378.5,203.0 383.7,203.0 388.8,186.6 387.1,179.6 378.5,188.4" fill="#f1efeb" stroke="#f4f6fb" stroke-width="1.5" stroke-linejoin="round"/>
<polygon points="294.6,60.5 304.9,57.8 306.6,52.3 299.8,43.5 298.1,35.6 292.9,37.2 294.6,46.5 298.1,49.4 294.6,55.0" fill="#f1efeb" stroke="#f4f6fb" stroke-width="1.5" stroke-linejoin="round"/>
<polygon points="286.1,55.0 292.9,55.0 292.9,46.5 289.5,46.5" fill="#f1efeb" stroke="#f4f6fb" stroke-width="1.5" stroke-linejoin="round"/>
<polygon points="262.1,16.1 279.2,16.1 279.2,8.0 265.5,5.9" fill="#f1efeb" stroke="#f4f6fb" stroke-width="1.5" stroke-linejoin="round"/>
<polygon points="525.8,103.5 527.5,97.4 534.3,95.3 542.9,93.3 542.9,82.4 546.3,77.8 551.4,75.5 544.6,73.1 542.9,82.4 544.6,89.0 539.5,97.4 530.9,99.5" fill="#f1efeb" stroke="#f4f6fb" stroke-width="1.5" stroke-linejoin="round"/>
<polygon points="508.6,127.9 512.1,127.9 515.5,136.7 518.9,147.1 512.1,147.1 508.6,134.9" fill="#f1efeb" stroke="#f4f6fb" stroke-width="1.5" stroke-linejoin="round"/>
<polygon points="489.8,155.6 498.4,152.2 503.5,147.1 506.9,150.5 505.2,157.3 501.8,165.8 491.5,164.1" fill="#f1efeb" stroke="#f4f6fb" stroke-width="1.5" stroke-linejoin="round"/>
<polygon points="465.8,150.5 471.0,152.2 481.2,160.7 484.7,169.2 476.1,164.1" fill="#f1efeb" stroke="#f4f6fb" stroke-width="1.5" stroke-linejoin="round"/>
<polygon points="483.0,169.2 498.4,170.9 498.4,173.5 484.7,170.9" fill="#f1efeb" stroke="#f4f6fb" stroke-width="1.5" stroke-linejoin="round"/>
<polygon points="506.9,167.5 508.6,157.3 517.2,157.3 512.1,160.7 513.8,167.5" fill="#f1efeb" stroke="#f4f6fb" stroke-width="1.5" stroke-linejoin="round"/>
<polygon points="527.5,160.7 544.6,162.4 554.9,169.2 560.0,176.1 548.0,174.4 539.5,172.7 534.3,165.8" fill="#f1efeb" stroke="#f4f6fb" stroke-width="1.5" stroke-linejoin="round"/>
<polygon points="498.4,197.4 498.4,220.6 505.2,222.7 515.5,218.5 527.5,214.5 539.5,222.7 544.6,229.0 554.9,229.0 560.0,226.9 565.1,212.6 565.1,203.0 553.2,191.9 548.0,177.8 544.6,181.3 536.0,179.6 536.0,186.6 527.5,179.6 518.9,183.1 512.1,190.1" fill="#f1efeb" stroke="#f4f6fb" stroke-width="1.5" stroke-linejoin="round"/>
<polygon points="597.7,220.6 607.9,229.0 602.8,235.6 596.0,242.5 589.1,247.4 594.2,237.9 601.1,231.2" fill="#f1efeb" stroke="#f4f6fb" stroke-width="1.5" stroke-linejoin="round"/>
<polygon points="440.2,148.8 443.6,147.1 441.9,142.8 439.8,145.3" fill="#f1efeb" stroke="#f4f6fb" stroke-width="1.5" stroke-linejoin="round"/>
<polygon points="157.7,120.6 166.2,118.8 176.5,124.3 169.7,124.3" fill="#f1efeb" stroke="#f4f6fb" stroke-width="1.5" stroke-linejoin="round"/>
<polygon points="546.3,70.6 548.0,49.4 549.7,63.1" fill="#f1efeb" stroke="#f4f6fb" stroke-width="1.5" stroke-linejoin="round"/>
<polygon points="140.6,30.6 142.3,40.4 152.5,43.5 162.8,52.3 168.0,46.5 169.7,23.6 157.7,12.1 140.6,19.9" fill="#adc8f0"/>
<polygon points="383.7,73.1 388.8,69.4 393.9,73.1 392.2,82.4 395.6,91.1 388.8,91.1 387.1,84.6 383.7,77.8" fill="#adc8f0"/>
<text x="28" y="104" text-anchor="middle" style="font-family:Liberation Sans,sans-serif;font-size:14px;fill:#4a6fbd">Pacific</text>
<text x="30" y="119" text-anchor="middle" style="font-family:Liberation Sans,sans-serif;font-size:14px;fill:#4a6fbd">Ocean</text>
<text x="244" y="108" text-anchor="middle" style="font-family:Liberation Sans,sans-serif;font-size:14px;fill:#4a6fbd">Atlantic</text>
<text x="246" y="123" text-anchor="middle" style="font-family:Liberation Sans,sans-serif;font-size:14px;fill:#4a6fbd">Ocean</text>
<text x="447" y="201" text-anchor="middle" style="font-family:Liberation Sans,sans-serif;font-size:14px;fill:#4a6fbd">Indian</text>
<text x="448" y="216" text-anchor="middle" style="font-family:Liberation Sans,sans-serif;font-size:14px;fill:#4a6fbd">Ocean</text>
<circle cx="307.7" cy="59.7" r="6.5" fill="rgba(20,225,20,0.6)" stroke="#16c316" stroke-width="1.1"/>
<circle cx="306.8" cy="56.5" r="5.0" fill="rgba(20,225,20,0.6)" stroke="#16c316" stroke-width="1.1"/>
<circle cx="306.5" cy="58.5" r="5.0" fill="rgba(235,15,15,0.62)" stroke="#d00000" stroke-width="1.1"/>
<circle cx="316.8" cy="60.0" r="6.5" fill="rgba(20,225,20,0.6)" stroke="#16c316" stroke-width="1.1"/>
<circle cx="310.5" cy="49.8" r="5.5" fill="rgba(20,225,20,0.6)" stroke="#16c316" stroke-width="1.1"/><path d="M310.5 44.3 A5.5 5.5 0 0 1 310.5 55.3 Z" fill="rgba(215,20,20,0.75)" stroke="#d00000" stroke-width="1"/>
<circle cx="311.4" cy="48.8" r="5.0" fill="rgba(20,225,20,0.6)" stroke="#16c316" stroke-width="1.1"/>
<circle cx="319.5" cy="54.7" r="4.5" fill="rgba(235,15,15,0.62)" stroke="#d00000" stroke-width="1.1"/>
<circle cx="318.1" cy="58.8" r="5.5" fill="rgba(235,15,15,0.62)" stroke="#d00000" stroke-width="1.1"/>
<circle cx="313.3" cy="54.4" r="5.0" fill="rgba(20,225,20,0.6)" stroke="#16c316" stroke-width="1.1"/>
<circle cx="305.6" cy="57.0" r="5.5" fill="rgba(20,225,20,0.6)" stroke="#16c316" stroke-width="1.1"/>
<circle cx="309.1" cy="62.0" r="6.5" fill="rgba(235,15,15,0.62)" stroke="#d00000" stroke-width="1.1"/>
<circle cx="317.6" cy="69.1" r="5.5" fill="rgba(235,15,15,0.62)" stroke="#d00000" stroke-width="1.1"/>
<circle cx="331.0" cy="62.2" r="5.5" fill="rgba(235,15,15,0.62)" stroke="#d00000" stroke-width="1.1"/>
<circle cx="317.2" cy="59.6" r="4.5" fill="rgba(20,225,20,0.6)" stroke="#16c316" stroke-width="1.1"/>
<circle cx="323.8" cy="57.0" r="4.5" fill="rgba(20,225,20,0.6)" stroke="#16c316" stroke-width="1.1"/>
<circle cx="326.4" cy="56.1" r="4.5" fill="rgba(20,225,20,0.6)" stroke="#16c316" stroke-width="1.1"/>
<circle cx="322.0" cy="67.2" r="5.0" fill="rgba(235,15,15,0.62)" stroke="#d00000" stroke-width="1.1"/>
<circle cx="307.3" cy="73.1" r="6.5" fill="rgba(20,225,20,0.6)" stroke="#16c316" stroke-width="1.1"/><path d="M307.3 66.6 A6.5 6.5 0 0 1 307.3 79.6 Z" fill="rgba(215,20,20,0.75)" stroke="#d00000" stroke-width="1"/>
<circle cx="326.7" cy="65.4" r="4.5" fill="rgba(235,15,15,0.62)" stroke="#d00000" stroke-width="1.1"/>
<circle cx="319.5" cy="52.7" r="5.5" fill="rgba(235,15,15,0.62)" stroke="#d00000" stroke-width="1.1"/>
<circle cx="293.6" cy="55.8" r="6.5" fill="rgba(235,15,15,0.62)" stroke="#d00000" stroke-width="1.1"/>
<circle cx="315.4" cy="54.2" r="5.5" fill="rgba(20,225,20,0.6)" stroke="#16c316" stroke-width="1.1"/><path d="M315.4 48.7 A5.5 5.5 0 0 1 315.4 59.7 Z" fill="rgba(215,20,20,0.75)" stroke="#d00000" stroke-width="1"/>
<circle cx="334.8" cy="57.0" r="6.5" fill="rgba(20,225,20,0.6)" stroke="#16c316" stroke-width="1.1"/>
<circle cx="319.7" cy="57.0" r="5.0" fill="rgba(20,225,20,0.6)" stroke="#16c316" stroke-width="1.1"/>
<circle cx="325.3" cy="48.8" r="4.5" fill="rgba(235,15,15,0.62)" stroke="#d00000" stroke-width="1.1"/>
<circle cx="323.5" cy="63.2" r="4.5" fill="rgba(20,225,20,0.6)" stroke="#16c316" stroke-width="1.1"/>
<circle cx="314.6" cy="62.3" r="4.5" fill="rgba(235,15,15,0.62)" stroke="#d00000" stroke-width="1.1"/>
<circle cx="321.1" cy="66.9" r="4.5" fill="rgba(20,225,20,0.6)" stroke="#16c316" stroke-width="1.1"/>
<circle cx="311.6" cy="62.7" r="5.5" fill="rgba(20,225,20,0.6)" stroke="#16c316" stroke-width="1.1"/>
<circle cx="303.0" cy="50.5" r="5.0" fill="rgba(20,225,20,0.6)" stroke="#16c316" stroke-width="1.1"/>
<circle cx="315.7" cy="61.8" r="5.5" fill="rgba(235,15,15,0.62)" stroke="#d00000" stroke-width="1.1"/>
<circle cx="323.1" cy="68.0" r="5.5" fill="rgba(235,15,15,0.62)" stroke="#d00000" stroke-width="1.1"/>
<circle cx="334.5" cy="52.4" r="5.5" fill="rgba(235,15,15,0.62)" stroke="#d00000" stroke-width="1.1"/>
<circle cx="321.9" cy="58.0" r="5.5" fill="rgba(20,225,20,0.6)" stroke="#16c316" stroke-width="1.1"/><path d="M321.9 52.5 A5.5 5.5 0 0 1 321.9 63.5 Z" fill="rgba(215,20,20,0.75)" stroke="#d00000" stroke-width="1"/>
<circle cx="319.0" cy="68.2" r="5.0" fill="rgba(20,225,20,0.6)" stroke="#16c316" stroke-width="1.1"/>
<circle cx="326.1" cy="52.3" r="5.5" fill="rgba(235,15,15,0.62)" stroke="#d00000" stroke-width="1.1"/>
<circle cx="317.4" cy="54.3" r="5.0" fill="rgba(20,225,20,0.6)" stroke="#16c316" stroke-width="1.1"/>
<circle cx="311.4" cy="48.8" r="4.5" fill="rgba(235,15,15,0.62)" stroke="#d00000" stroke-width="1.1"/>
<circle cx="322.9" cy="54.6" r="4.5" fill="rgba(235,15,15,0.62)" stroke="#d00000" stroke-width="1.1"/>
<circle cx="312.6" cy="59.9" r="4.5" fill="rgba(235,15,15,0.62)" stroke="#d00000" stroke-width="1.1"/>
<circle cx="310.6" cy="63.9" r="5.0" fill="rgba(235,15,15,0.62)" stroke="#d00000" stroke-width="1.1"/>
<circle cx="323.9" cy="63.0" r="5.0" fill="rgba(20,225,20,0.6)" stroke="#16c316" stroke-width="1.1"/>
<circle cx="314.0" cy="48.1" r="5.0" fill="rgba(20,225,20,0.6)" stroke="#16c316" stroke-width="1.1"/>
<circle cx="326.5" cy="53.2" r="5.0" fill="rgba(20,225,20,0.6)" stroke="#16c316" stroke-width="1.1"/>
<circle cx="319.7" cy="56.7" r="6.0" fill="rgba(235,15,15,0.62)" stroke="#d00000" stroke-width="1.1"/>
<circle cx="346.5" cy="75.0" r="5.0" fill="rgba(20,225,20,0.6)" stroke="#16c316" stroke-width="1.1"/><path d="M346.5 70.0 A5.0 5.0 0 0 1 346.5 80.0 Z" fill="rgba(215,20,20,0.75)" stroke="#d00000" stroke-width="1"/>
<circle cx="350.1" cy="76.8" r="6.0" fill="rgba(235,15,15,0.62)" stroke="#d00000" stroke-width="1.1"/>
<circle cx="354.3" cy="66.6" r="5.0" fill="rgba(20,225,20,0.6)" stroke="#16c316" stroke-width="1.1"/>
<circle cx="346.7" cy="68.0" r="6.0" fill="rgba(20,225,20,0.6)" stroke="#16c316" stroke-width="1.1"/>
<circle cx="356.8" cy="79.8" r="6.5" fill="rgba(235,15,15,0.62)" stroke="#d00000" stroke-width="1.1"/>
<circle cx="336.2" cy="72.0" r="6.0" fill="rgba(20,225,20,0.6)" stroke="#16c316" stroke-width="1.1"/>
<circle cx="325.2" cy="66.3" r="4.5" fill="rgba(235,15,15,0.62)" stroke="#d00000" stroke-width="1.1"/>
<circle cx="344.2" cy="76.3" r="5.5" fill="rgba(20,225,20,0.6)" stroke="#16c316" stroke-width="1.1"/>
<circle cx="324.5" cy="80.8" r="5.5" fill="rgba(20,225,20,0.6)" stroke="#16c316" stroke-width="1.1"/>
<circle cx="324.9" cy="74.4" r="5.5" fill="rgba(20,225,20,0.6)" stroke="#16c316" stroke-width="1.1"/>
<circle cx="352.4" cy="74.1" r="5.5" fill="rgba(235,15,15,0.62)" stroke="#d00000" stroke-width="1.1"/>
<circle cx="343.1" cy="70.9" r="6.5" fill="rgba(20,225,20,0.6)" stroke="#16c316" stroke-width="1.1"/>
<circle cx="345.3" cy="68.9" r="4.5" fill="rgba(20,225,20,0.6)" stroke="#16c316" stroke-width="1.1"/>
<circle cx="347.2" cy="81.1" r="5.5" fill="rgba(235,15,15,0.62)" stroke="#d00000" stroke-width="1.1"/>
<circle cx="351.2" cy="65.1" r="5.5" fill="rgba(20,225,20,0.6)" stroke="#16c316" stroke-width="1.1"/>
<circle cx="338.6" cy="80.5" r="5.0" fill="rgba(235,15,15,0.62)" stroke="#d00000" stroke-width="1.1"/>
<circle cx="320.3" cy="78.4" r="5.0" fill="rgba(20,225,20,0.6)" stroke="#16c316" stroke-width="1.1"/>
<circle cx="327.3" cy="79.4" r="5.0" fill="rgba(235,15,15,0.62)" stroke="#d00000" stroke-width="1.1"/>
<circle cx="344.7" cy="77.8" r="6.5" fill="rgba(235,15,15,0.62)" stroke="#d00000" stroke-width="1.1"/>
<circle cx="365.9" cy="81.2" r="6.5" fill="rgba(235,15,15,0.62)" stroke="#d00000" stroke-width="1.1"/>
<circle cx="329.7" cy="74.1" r="5.0" fill="rgba(20,225,20,0.6)" stroke="#16c316" stroke-width="1.1"/>
<circle cx="328.3" cy="78.8" r="6.0" fill="rgba(20,225,20,0.6)" stroke="#16c316" stroke-width="1.1"/>
<circle cx="354.3" cy="51.8" r="5.5" fill="rgba(20,225,20,0.6)" stroke="#16c316" stroke-width="1.1"/>
<circle cx="342.1" cy="66.0" r="5.5" fill="rgba(235,15,15,0.62)" stroke="#d00000" stroke-width="1.1"/>
<circle cx="334.4" cy="61.4" r="5.0" fill="rgba(20,225,20,0.6)" stroke="#16c316" stroke-width="1.1"/>
<circle cx="323.8" cy="67.3" r="5.5" fill="rgba(20,225,20,0.6)" stroke="#16c316" stroke-width="1.1"/>
<circle cx="358.1" cy="74.4" r="5.0" fill="rgba(20,225,20,0.6)" stroke="#16c316" stroke-width="1.1"/>
<circle cx="347.0" cy="48.9" r="4.5" fill="rgba(20,225,20,0.6)" stroke="#16c316" stroke-width="1.1"/>
<circle cx="327.2" cy="63.1" r="6.5" fill="rgba(20,225,20,0.6)" stroke="#16c316" stroke-width="1.1"/>
<circle cx="344.3" cy="74.6" r="6.5" fill="rgba(20,225,20,0.6)" stroke="#16c316" stroke-width="1.1"/>
<circle cx="303.4" cy="47.8" r="5.5" fill="rgba(20,225,20,0.6)" stroke="#16c316" stroke-width="1.1"/>
<circle cx="307.2" cy="48.0" r="6.5" fill="rgba(235,15,15,0.62)" stroke="#d00000" stroke-width="1.1"/>
<circle cx="300.6" cy="40.1" r="5.5" fill="rgba(20,225,20,0.6)" stroke="#16c316" stroke-width="1.1"/><path d="M300.6 34.6 A5.5 5.5 0 0 1 300.6 45.6 Z" fill="rgba(215,20,20,0.75)" stroke="#d00000" stroke-width="1"/>
<circle cx="309.3" cy="56.8" r="6.0" fill="rgba(20,225,20,0.6)" stroke="#16c316" stroke-width="1.1"/><path d="M309.3 50.8 A6.0 6.0 0 0 1 309.3 62.8 Z" fill="rgba(215,20,20,0.75)" stroke="#d00000" stroke-width="1"/>
<circle cx="314.9" cy="54.3" r="6.0" fill="rgba(235,15,15,0.62)" stroke="#d00000" stroke-width="1.1"/>
<circle cx="299.2" cy="48.2" r="4.5" fill="rgba(235,15,15,0.62)" stroke="#d00000" stroke-width="1.1"/>
<circle cx="291.8" cy="41.8" r="6.5" fill="rgba(20,225,20,0.6)" stroke="#16c316" stroke-width="1.1"/>
<circle cx="300.1" cy="51.4" r="5.0" fill="rgba(235,15,15,0.62)" stroke="#d00000" stroke-width="1.1"/>
<circle cx="310.2" cy="39.0" r="6.0" fill="rgba(235,15,15,0.62)" stroke="#d00000" stroke-width="1.1"/>
<circle cx="303.3" cy="53.0" r="4.5" fill="rgba(20,225,20,0.6)" stroke="#16c316" stroke-width="1.1"/><path d="M303.3 48.5 A4.5 4.5 0 0 1 303.3 57.5 Z" fill="rgba(215,20,20,0.75)" stroke="#d00000" stroke-width="1"/>
<circle cx="318.5" cy="19.6" r="5.0" fill="rgba(20,225,20,0.6)" stroke="#16c316" stroke-width="1.1"/>
<circle cx="332.7" cy="21.0" r="5.5" fill="rgba(235,15,15,0.62)" stroke="#d00000" stroke-width="1.1"/>
<circle cx="323.1" cy="24.8" r="6.5" fill="rgba(20,225,20,0.6)" stroke="#16c316" stroke-width="1.1"/>
<circle cx="338.2" cy="20.0" r="6.5" fill="rgba(235,15,15,0.62)" stroke="#d00000" stroke-width="1.1"/>
<circle cx="334.6" cy="18.5" r="5.0" fill="rgba(20,225,20,0.6)" stroke="#16c316" stroke-width="1.1"/>
<circle cx="341.2" cy="18.6" r="5.5" fill="rgba(20,225,20,0.6)" stroke="#16c316" stroke-width="1.1"/><path d="M341.2 13.1 A5.5 5.5 0 0 1 341.2 24.1 Z" fill="rgba(215,20,20,0.75)" stroke="#d00000" stroke-width="1"/>
<circle cx="320.4" cy="21.0" r="5.5" fill="rgba(20,225,20,0.6)" stroke="#16c316" stroke-width="1.1"/><path d="M320.4 15.5 A5.5 5.5 0 0 1 320.4 26.5 Z" fill="rgba(215,20,20,0.75)" stroke="#d00000" stroke-width="1"/>
<circle cx="312.5" cy="22.7" r="4.5" fill="rgba(20,225,20,0.6)" stroke="#16c316" stroke-width="1.1"/>
<circle cx="323.0" cy="24.9" r="6.5" fill="rgba(20,225,20,0.6)" stroke="#16c316" stroke-width="1.1"/>
<circle cx="326.4" cy="16.4" r="6.5" fill="rgba(20,225,20,0.6)" stroke="#16c316" stroke-width="1.1"/><path d="M326.4 9.9 A6.5 6.5 0 0 1 326.4 22.9 Z" fill="rgba(215,20,20,0.75)" stroke="#d00000" stroke-width="1"/>
<circle cx="332.5" cy="30.9" r="6.5" fill="rgba(20,225,20,0.6)" stroke="#16c316" stroke-width="1.1"/>
<circle cx="327.5" cy="18.8" r="5.0" fill="rgba(20,225,20,0.6)" stroke="#16c316" stroke-width="1.1"/><path d="M327.5 13.8 A5.0 5.0 0 0 1 327.5 23.8 Z" fill="rgba(215,20,20,0.75)" stroke="#d00000" stroke-width="1"/>
<circle cx="322.2" cy="20.8" r="5.0" fill="rgba(20,225,20,0.6)" stroke="#16c316" stroke-width="1.1"/>
<circle cx="333.6" cy="22.4" r="5.5" fill="rgba(235,15,15,0.62)" stroke="#d00000" stroke-width="1.1"/>
<circle cx="377.9" cy="88.9" r="5.5" fill="rgba(20,225,20,0.6)" stroke="#16c316" stroke-width="1.1"/>
<circle cx="372.3" cy="89.8" r="4.5" fill="rgba(20,225,20,0.6)" stroke="#16c316" stroke-width="1.1"/>
<circle cx="377.6" cy="92.4" r="5.5" fill="rgba(20,225,20,0.6)" stroke="#16c316" stroke-width="1.1"/><path d="M377.6 86.9 A5.5 5.5 0 0 1 377.6 97.9 Z" fill="rgba(215,20,20,0.75)" stroke="#d00000" stroke-width="1"/>
<circle cx="370.7" cy="85.4" r="5.0" fill="rgba(20,225,20,0.6)" stroke="#16c316" stroke-width="1.1"/>
<circle cx="374.3" cy="93.7" r="6.5" fill="rgba(20,225,20,0.6)" stroke="#16c316" stroke-width="1.1"/><path d="M374.3 87.2 A6.5 6.5 0 0 1 374.3 100.2 Z" fill="rgba(215,20,20,0.75)" stroke="#d00000" stroke-width="1"/>
<circle cx="377.0" cy="87.2" r="4.5" fill="rgba(235,15,15,0.62)" stroke="#d00000" stroke-width="1.1"/>
<circle cx="353.9" cy="82.6" r="5.0" fill="rgba(20,225,20,0.6)" stroke="#16c316" stroke-width="1.1"/>
<circle cx="370.2" cy="89.8" r="5.0" fill="rgba(235,15,15,0.62)" stroke="#d00000" stroke-width="1.1"/>
<circle cx="365.1" cy="86.1" r="5.0" fill="rgba(235,15,15,0.62)" stroke="#d00000" stroke-width="1.1"/>
<circle cx="358.1" cy="90.0" r="5.5" fill="rgba(235,15,15,0.62)" stroke="#d00000" stroke-width="1.1"/>
<circle cx="361.6" cy="89.8" r="5.0" fill="rgba(20,225,20,0.6)" stroke="#16c316" stroke-width="1.1"/>
<circle cx="369.3" cy="89.3" r="6.0" fill="rgba(20,225,20,0.6)" stroke="#16c316" stroke-width="1.1"/>
<circle cx="363.1" cy="89.5" r="5.0" fill="rgba(20,225,20,0.6)" stroke="#16c316" stroke-width="1.1"/>
<circle cx="362.2" cy="89.3" r="5.0" fill="rgba(20,225,20,0.6)" stroke="#16c316" stroke-width="1.1"/>
<circle cx="355.4" cy="83.9" r="5.0" fill="rgba(20,225,20,0.6)" stroke="#16c316" stroke-width="1.1"/><path d="M355.4 78.9 A5.0 5.0 0 0 1 355.4 88.9 Z" fill="rgba(215,20,20,0.75)" stroke="#d00000" stroke-width="1"/>
<circle cx="362.6" cy="86.8" r="5.0" fill="rgba(20,225,20,0.6)" stroke="#16c316" stroke-width="1.1"/>
<circle cx="360.5" cy="100.0" r="5.0" fill="rgba(20,225,20,0.6)" stroke="#16c316" stroke-width="1.1"/>
<circle cx="369.3" cy="92.0" r="5.0" fill="rgba(235,15,15,0.62)" stroke="#d00000" stroke-width="1.1"/>
<circle cx="375.1" cy="92.5" r="5.5" fill="rgba(20,225,20,0.6)" stroke="#16c316" stroke-width="1.1"/>
<circle cx="354.9" cy="94.0" r="5.0" fill="rgba(235,15,15,0.62)" stroke="#d00000" stroke-width="1.1"/>
<circle cx="357.6" cy="83.8" r="4.5" fill="rgba(235,15,15,0.62)" stroke="#d00000" stroke-width="1.1"/>
<circle cx="360.4" cy="80.4" r="5.0" fill="rgba(235,15,15,0.62)" stroke="#d00000" stroke-width="1.1"/>
<circle cx="379.8" cy="85.7" r="5.5" fill="rgba(20,225,20,0.6)" stroke="#16c316" stroke-width="1.1"/><path d="M379.8 80.2 A5.5 5.5 0 0 1 379.8 91.2 Z" fill="rgba(215,20,20,0.75)" stroke="#d00000" stroke-width="1"/>
<circle cx="407.7" cy="79.4" r="5.5" fill="rgba(235,15,15,0.62)" stroke="#d00000" stroke-width="1.1"/>
<circle cx="411.3" cy="87.2" r="5.5" fill="rgba(20,225,20,0.6)" stroke="#16c316" stroke-width="1.1"/><path d="M411.3 81.7 A5.5 5.5 0 0 1 411.3 92.7 Z" fill="rgba(215,20,20,0.75)" stroke="#d00000" stroke-width="1"/>
<circle cx="391.0" cy="86.3" r="4.5" fill="rgba(235,15,15,0.62)" stroke="#d00000" stroke-width="1.1"/>
<circle cx="415.7" cy="75.2" r="6.0" fill="rgba(235,15,15,0.62)" stroke="#d00000" stroke-width="1.1"/>
<circle cx="422.6" cy="89.9" r="5.5" fill="rgba(235,15,15,0.62)" stroke="#d00000" stroke-width="1.1"/>
<circle cx="406.8" cy="88.4" r="5.5" fill="rgba(20,225,20,0.6)" stroke="#16c316" stroke-width="1.1"/>
<circle cx="384.8" cy="88.4" r="4.5" fill="rgba(20,225,20,0.6)" stroke="#16c316" stroke-width="1.1"/>
<circle cx="405.0" cy="86.7" r="5.5" fill="rgba(20,225,20,0.6)" stroke="#16c316" stroke-width="1.1"/>
<circle cx="397.3" cy="81.7" r="5.0" fill="rgba(20,225,20,0.6)" stroke="#16c316" stroke-width="1.1"/>
<circle cx="413.9" cy="90.2" r="5.0" fill="rgba(20,225,20,0.6)" stroke="#16c316" stroke-width="1.1"/>
<circle cx="403.4" cy="79.8" r="6.5" fill="rgba(20,225,20,0.6)" stroke="#16c316" stroke-width="1.1"/><path d="M403.4 73.3 A6.5 6.5 0 0 1 403.4 86.3 Z" fill="rgba(215,20,20,0.75)" stroke="#d00000" stroke-width="1"/>
<circle cx="411.0" cy="84.0" r="5.0" fill="rgba(20,225,20,0.6)" stroke="#16c316" stroke-width="1.1"/>
<circle cx="417.4" cy="85.2" r="5.0" fill="rgba(235,15,15,0.62)" stroke="#d00000" stroke-width="1.1"/>
<circle cx="411.3" cy="90.6" r="5.0" fill="rgba(20,225,20,0.6)" stroke="#16c316" stroke-width="1.1"/>
<circle cx="378.9" cy="91.0" r="5.5" fill="rgba(20,225,20,0.6)" stroke="#16c316" stroke-width="1.1"/>
<circle cx="400.0" cy="78.9" r="5.5" fill="rgba(235,15,15,0.62)" stroke="#d00000" stroke-width="1.1"/>
<circle cx="405.7" cy="92.9" r="5.0" fill="rgba(20,225,20,0.6)" stroke="#16c316" stroke-width="1.1"/>
<circle cx="408.1" cy="86.3" r="6.0" fill="rgba(20,225,20,0.6)" stroke="#16c316" stroke-width="1.1"/><path d="M408.1 80.3 A6.0 6.0 0 0 1 408.1 92.3 Z" fill="rgba(215,20,20,0.75)" stroke="#d00000" stroke-width="1"/>
<circle cx="406.2" cy="87.0" r="6.0" fill="rgba(235,15,15,0.62)" stroke="#d00000" stroke-width="1.1"/>
<circle cx="400.3" cy="90.2" r="5.0" fill="rgba(20,225,20,0.6)" stroke="#16c316" stroke-width="1.1"/>
<circle cx="362.6" cy="97.4" r="6.0" fill="rgba(235,15,15,0.62)" stroke="#d00000" stroke-width="1.1"/>
<circle cx="428.3" cy="79.5" r="5.5" fill="rgba(235,15,15,0.62)" stroke="#d00000" stroke-width="1.1"/>
<circle cx="414.2" cy="73.1" r="5.0" fill="rgba(20,225,20,0.6)" stroke="#16c316" stroke-width="1.1"/>
<circle cx="410.8" cy="76.8" r="6.0" fill="rgba(20,225,20,0.6)" stroke="#16c316" stroke-width="1.1"/>
<circle cx="427.5" cy="78.6" r="5.0" fill="rgba(20,225,20,0.6)" stroke="#16c316" stroke-width="1.1"/>
<circle cx="404.2" cy="76.5" r="5.5" fill="rgba(20,225,20,0.6)" stroke="#16c316" stroke-width="1.1"/>
<circle cx="429.3" cy="79.3" r="6.0" fill="rgba(235,15,15,0.62)" stroke="#d00000" stroke-width="1.1"/>
<circle cx="413.1" cy="73.5" r="4.5" fill="rgba(20,225,20,0.6)" stroke="#16c316" stroke-width="1.1"/>
<circle cx="429.6" cy="75.7" r="5.0" fill="rgba(20,225,20,0.6)" stroke="#16c316" stroke-width="1.1"/>
<circle cx="413.6" cy="75.7" r="5.5" fill="rgba(20,225,20,0.6)" stroke="#16c316" stroke-width="1.1"/><path d="M413.6 70.2 A5.5 5.5 0 0 1 413.6 81.2 Z" fill="rgba(215,20,20,0.75)" stroke="#d00000" stroke-width="1"/>
<circle cx="415.3" cy="79.1" r="5.5" fill="rgba(235,15,15,0.62)" stroke="#d00000" stroke-width="1.1"/>
<circle cx="414.9" cy="76.2" r="5.0" fill="rgba(20,225,20,0.6)" stroke="#16c316" stroke-width="1.1"/>
<circle cx="420.6" cy="82.6" r="5.0" fill="rgba(235,15,15,0.62)" stroke="#d00000" stroke-width="1.1"/>
<circle cx="434.1" cy="102.1" r="6.0" fill="rgba(235,15,15,0.62)" stroke="#d00000" stroke-width="1.1"/>
<circle cx="433.2" cy="104.0" r="5.0" fill="rgba(20,225,20,0.6)" stroke="#16c316" stroke-width="1.1"/>
<circle cx="450.1" cy="115.6" r="5.0" fill="rgba(235,15,15,0.62)" stroke="#d00000" stroke-width="1.1"/>
<circle cx="438.3" cy="106.4" r="5.5" fill="rgba(235,15,15,0.62)" stroke="#d00000" stroke-width="1.1"/>
<circle cx="433.1" cy="108.2" r="4.5" fill="rgba(20,225,20,0.6)" stroke="#16c316" stroke-width="1.1"/><path d="M433.1 103.7 A4.5 4.5 0 0 1 433.1 112.7 Z" fill="rgba(215,20,20,0.75)" stroke="#d00000" stroke-width="1"/>
<circle cx="431.9" cy="103.4" r="6.5" fill="rgba(235,15,15,0.62)" stroke="#d00000" stroke-width="1.1"/>
<circle cx="432.5" cy="108.1" r="5.5" fill="rgba(20,225,20,0.6)" stroke="#16c316" stroke-width="1.1"/>
<circle cx="433.6" cy="111.9" r="5.5" fill="rgba(235,15,15,0.62)" stroke="#d00000" stroke-width="1.1"/>
<circle cx="430.8" cy="112.5" r="5.5" fill="rgba(20,225,20,0.6)" stroke="#16c316" stroke-width="1.1"/>
<circle cx="432.4" cy="117.9" r="5.5" fill="rgba(20,225,20,0.6)" stroke="#16c316" stroke-width="1.1"/>
<circle cx="341.7" cy="130.8" r="5.0" fill="rgba(20,225,20,0.6)" stroke="#16c316" stroke-width="1.1"/><path d="M341.7 125.8 A5.0 5.0 0 0 1 341.7 135.8 Z" fill="rgba(215,20,20,0.75)" stroke="#d00000" stroke-width="1"/>
<circle cx="341.7" cy="138.7" r="4.5" fill="rgba(20,225,20,0.6)" stroke="#16c316" stroke-width="1.1"/>
<circle cx="335.3" cy="152.0" r="6.5" fill="rgba(20,225,20,0.6)" stroke="#16c316" stroke-width="1.1"/>
<circle cx="339.3" cy="154.8" r="5.5" fill="rgba(20,225,20,0.6)" stroke="#16c316" stroke-width="1.1"/>
<circle cx="348.4" cy="149.4" r="5.0" fill="rgba(235,15,15,0.62)" stroke="#d00000" stroke-width="1.1"/>
<circle cx="343.3" cy="164.1" r="5.0" fill="rgba(20,225,20,0.6)" stroke="#16c316" stroke-width="1.1"/>
<circle cx="349.2" cy="144.6" r="5.0" fill="rgba(20,225,20,0.6)" stroke="#16c316" stroke-width="1.1"/>
<circle cx="347.9" cy="144.3" r="5.0" fill="rgba(20,225,20,0.6)" stroke="#16c316" stroke-width="1.1"/>
<circle cx="349.9" cy="145.3" r="6.0" fill="rgba(235,15,15,0.62)" stroke="#d00000" stroke-width="1.1"/>
<circle cx="347.9" cy="164.2" r="5.5" fill="rgba(20,225,20,0.6)" stroke="#16c316" stroke-width="1.1"/>
<circle cx="347.0" cy="150.4" r="6.0" fill="rgba(235,15,15,0.62)" stroke="#d00000" stroke-width="1.1"/>
<circle cx="365.1" cy="134.5" r="5.5" fill="rgba(20,225,20,0.6)" stroke="#16c316" stroke-width="1.1"/>
<circle cx="321.0" cy="135.4" r="5.0" fill="rgba(20,225,20,0.6)" stroke="#16c316" stroke-width="1.1"/>
<circle cx="342.7" cy="136.8" r="5.0" fill="rgba(20,225,20,0.6)" stroke="#16c316" stroke-width="1.1"/>
<circle cx="312.2" cy="126.2" r="5.0" fill="rgba(20,225,20,0.6)" stroke="#16c316" stroke-width="1.1"/>
<circle cx="344.9" cy="130.6" r="5.0" fill="rgba(20,225,20,0.6)" stroke="#16c316" stroke-width="1.1"/>
<circle cx="337.5" cy="146.4" r="5.0" fill="rgba(235,15,15,0.62)" stroke="#d00000" stroke-width="1.1"/>
<circle cx="363.1" cy="148.6" r="5.5" fill="rgba(20,225,20,0.6)" stroke="#16c316" stroke-width="1.1"/>
<circle cx="310.4" cy="147.0" r="4.5" fill="rgba(235,15,15,0.62)" stroke="#d00000" stroke-width="1.1"/>
<circle cx="349.1" cy="154.3" r="4.5" fill="rgba(20,225,20,0.6)" stroke="#16c316" stroke-width="1.1"/>
<circle cx="312.4" cy="144.4" r="5.0" fill="rgba(20,225,20,0.6)" stroke="#16c316" stroke-width="1.1"/>
<circle cx="353.6" cy="149.3" r="6.0" fill="rgba(20,225,20,0.6)" stroke="#16c316" stroke-width="1.1"/>
<circle cx="356.2" cy="140.5" r="5.5" fill="rgba(20,225,20,0.6)" stroke="#16c316" stroke-width="1.1"/>
<circle cx="380.2" cy="135.6" r="5.0" fill="rgba(20,225,20,0.6)" stroke="#16c316" stroke-width="1.1"/>
<circle cx="348.0" cy="138.2" r="5.0" fill="rgba(20,225,20,0.6)" stroke="#16c316" stroke-width="1.1"/>
<circle cx="371.5" cy="141.7" r="5.5" fill="rgba(20,225,20,0.6)" stroke="#16c316" stroke-width="1.1"/>
<circle cx="331.9" cy="149.2" r="5.0" fill="rgba(20,225,20,0.6)" stroke="#16c316" stroke-width="1.1"/>
<circle cx="315.3" cy="137.5" r="6.0" fill="rgba(20,225,20,0.6)" stroke="#16c316" stroke-width="1.1"/>
<circle cx="349.5" cy="135.4" r="6.5" fill="rgba(20,225,20,0.6)" stroke="#16c316" stroke-width="1.1"/>
<circle cx="346.4" cy="146.8" r="5.5" fill="rgba(20,225,20,0.6)" stroke="#16c316" stroke-width="1.1"/>
<circle cx="342.3" cy="145.5" r="5.5" fill="rgba(235,15,15,0.62)" stroke="#d00000" stroke-width="1.1"/>
<circle cx="351.2" cy="149.1" r="4.5" fill="rgba(20,225,20,0.6)" stroke="#16c316" stroke-width="1.1"/>
<circle cx="345.2" cy="141.5" r="5.5" fill="rgba(20,225,20,0.6)" stroke="#16c316" stroke-width="1.1"/>
<circle cx="327.4" cy="142.2" r="5.0" fill="rgba(20,225,20,0.6)" stroke="#16c316" stroke-width="1.1"/>
<circle cx="295.4" cy="143.1" r="6.0" fill="rgba(20,225,20,0.6)" stroke="#16c316" stroke-width="1.1"/>
<circle cx="303.8" cy="147.8" r="5.5" fill="rgba(235,15,15,0.62)" stroke="#d00000" stroke-width="1.1"/>
<circle cx="295.3" cy="150.0" r="5.5" fill="rgba(20,225,20,0.6)" stroke="#16c316" stroke-width="1.1"/>
<circle cx="286.5" cy="144.9" r="6.5" fill="rgba(20,225,20,0.6)" stroke="#16c316" stroke-width="1.1"/><path d="M286.5 138.4 A6.5 6.5 0 0 1 286.5 151.4 Z" fill="rgba(215,20,20,0.75)" stroke="#d00000" stroke-width="1"/>
<circle cx="289.1" cy="140.3" r="5.5" fill="rgba(20,225,20,0.6)" stroke="#16c316" stroke-width="1.1"/>
<circle cx="302.0" cy="146.2" r="4.5" fill="rgba(20,225,20,0.6)" stroke="#16c316" stroke-width="1.1"/>
<circle cx="297.9" cy="139.3" r="6.5" fill="rgba(235,15,15,0.62)" stroke="#d00000" stroke-width="1.1"/>
<circle cx="290.8" cy="145.1" r="5.5" fill="rgba(20,225,20,0.6)" stroke="#16c316" stroke-width="1.1"/><path d="M290.8 139.6 A5.5 5.5 0 0 1 290.8 150.6 Z" fill="rgba(215,20,20,0.75)" stroke="#d00000" stroke-width="1"/>
<circle cx="287.4" cy="140.6" r="6.0" fill="rgba(235,15,15,0.62)" stroke="#d00000" stroke-width="1.1"/>
<circle cx="305.6" cy="149.2" r="5.0" fill="rgba(235,15,15,0.62)" stroke="#d00000" stroke-width="1.1"/>
<circle cx="298.4" cy="148.4" r="6.0" fill="rgba(235,15,15,0.62)" stroke="#d00000" stroke-width="1.1"/>
<circle cx="295.1" cy="147.6" r="5.0" fill="rgba(235,15,15,0.62)" stroke="#d00000" stroke-width="1.1"/>
<circle cx="299.1" cy="141.3" r="6.0" fill="rgba(235,15,15,0.62)" stroke="#d00000" stroke-width="1.1"/>
<circle cx="285.6" cy="139.0" r="5.0" fill="rgba(20,225,20,0.6)" stroke="#16c316" stroke-width="1.1"/><path d="M285.6 134.0 A5.0 5.0 0 0 1 285.6 144.0 Z" fill="rgba(215,20,20,0.75)" stroke="#d00000" stroke-width="1"/>
<circle cx="293.0" cy="143.3" r="5.5" fill="rgba(20,225,20,0.6)" stroke="#16c316" stroke-width="1.1"/><path d="M293.0 137.8 A5.5 5.5 0 0 1 293.0 148.8 Z" fill="rgba(215,20,20,0.75)" stroke="#d00000" stroke-width="1"/>
<circle cx="296.4" cy="144.4" r="5.0" fill="rgba(20,225,20,0.6)" stroke="#16c316" stroke-width="1.1"/>
<circle cx="371.1" cy="120.2" r="5.5" fill="rgba(20,225,20,0.6)" stroke="#16c316" stroke-width="1.1"/>
<circle cx="378.6" cy="133.1" r="5.0" fill="rgba(20,225,20,0.6)" stroke="#16c316" stroke-width="1.1"/>
<circle cx="390.0" cy="115.0" r="6.0" fill="rgba(20,225,20,0.6)" stroke="#16c316" stroke-width="1.1"/>
<circle cx="380.8" cy="117.0" r="5.0" fill="rgba(20,225,20,0.6)" stroke="#16c316" stroke-width="1.1"/>
<circle cx="365.7" cy="140.8" r="6.0" fill="rgba(20,225,20,0.6)" stroke="#16c316" stroke-width="1.1"/>
<circle cx="384.6" cy="124.1" r="5.0" fill="rgba(20,225,20,0.6)" stroke="#16c316" stroke-width="1.1"/>
<circle cx="378.7" cy="132.0" r="6.5" fill="rgba(20,225,20,0.6)" stroke="#16c316" stroke-width="1.1"/>
<circle cx="370.9" cy="125.0" r="5.0" fill="rgba(20,225,20,0.6)" stroke="#16c316" stroke-width="1.1"/>
<circle cx="390.7" cy="134.8" r="4.5" fill="rgba(20,225,20,0.6)" stroke="#16c316" stroke-width="1.1"/>
<circle cx="383.4" cy="121.1" r="5.0" fill="rgba(20,225,20,0.6)" stroke="#16c316" stroke-width="1.1"/>
<circle cx="375.2" cy="123.5" r="5.0" fill="rgba(20,225,20,0.6)" stroke="#16c316" stroke-width="1.1"/>
<circle cx="386.1" cy="143.6" r="6.5" fill="rgba(20,225,20,0.6)" stroke="#16c316" stroke-width="1.1"/>
<circle cx="365.7" cy="104.0" r="5.0" fill="rgba(20,225,20,0.6)" stroke="#16c316" stroke-width="1.1"/>
<circle cx="385.4" cy="131.1" r="5.0" fill="rgba(235,15,15,0.62)" stroke="#d00000" stroke-width="1.1"/>
<circle cx="383.0" cy="110.3" r="6.5" fill="rgba(235,15,15,0.62)" stroke="#d00000" stroke-width="1.1"/>
<circle cx="373.1" cy="137.6" r="5.5" fill="rgba(235,15,15,0.62)" stroke="#d00000" stroke-width="1.1"/>
<circle cx="345.9" cy="188.5" r="6.0" fill="rgba(20,225,20,0.6)" stroke="#16c316" stroke-width="1.1"/>
<circle cx="363.7" cy="179.8" r="6.5" fill="rgba(20,225,20,0.6)" stroke="#16c316" stroke-width="1.1"/>
<circle cx="363.7" cy="202.3" r="6.5" fill="rgba(20,225,20,0.6)" stroke="#16c316" stroke-width="1.1"/>
<circle cx="361.5" cy="200.1" r="5.5" fill="rgba(20,225,20,0.6)" stroke="#16c316" stroke-width="1.1"/>
<circle cx="384.3" cy="177.8" r="5.0" fill="rgba(20,225,20,0.6)" stroke="#16c316" stroke-width="1.1"/>
<circle cx="366.2" cy="191.2" r="5.5" fill="rgba(20,225,20,0.6)" stroke="#16c316" stroke-width="1.1"/>
<circle cx="361.9" cy="188.7" r="5.0" fill="rgba(235,15,15,0.62)" stroke="#d00000" stroke-width="1.1"/>
<circle cx="348.5" cy="194.4" r="6.5" fill="rgba(20,225,20,0.6)" stroke="#16c316" stroke-width="1.1"/>
<circle cx="357.0" cy="185.6" r="5.5" fill="rgba(20,225,20,0.6)" stroke="#16c316" stroke-width="1.1"/>
<circle cx="349.1" cy="188.4" r="4.5" fill="rgba(20,225,20,0.6)" stroke="#16c316" stroke-width="1.1"/>
<circle cx="391.3" cy="189.2" r="6.5" fill="rgba(20,225,20,0.6)" stroke="#16c316" stroke-width="1.1"/>
<circle cx="363.1" cy="183.4" r="6.0" fill="rgba(20,225,20,0.6)" stroke="#16c316" stroke-width="1.1"/>
<circle cx="349.2" cy="184.8" r="5.0" fill="rgba(20,225,20,0.6)" stroke="#16c316" stroke-width="1.1"/>
<circle cx="353.7" cy="185.4" r="5.0" fill="rgba(20,225,20,0.6)" stroke="#16c316" stroke-width="1.1"/>
<circle cx="356.9" cy="177.4" r="5.0" fill="rgba(20,225,20,0.6)" stroke="#16c316" stroke-width="1.1"/>
<circle cx="356.4" cy="177.4" r="6.5" fill="rgba(20,225,20,0.6)" stroke="#16c316" stroke-width="1.1"/>
<circle cx="370.1" cy="196.0" r="5.0" fill="rgba(20,225,20,0.6)" stroke="#16c316" stroke-width="1.1"/>
<circle cx="356.2" cy="180.4" r="5.5" fill="rgba(235,15,15,0.62)" stroke="#d00000" stroke-width="1.1"/>
<circle cx="328.9" cy="209.1" r="4.5" fill="rgba(235,15,15,0.62)" stroke="#d00000" stroke-width="1.1"/>
<circle cx="339.7" cy="209.6" r="5.5" fill="rgba(20,225,20,0.6)" stroke="#16c316" stroke-width="1.1"/>
<circle cx="331.9" cy="216.4" r="5.5" fill="rgba(235,15,15,0.62)" stroke="#d00000" stroke-width="1.1"/>
<circle cx="338.9" cy="210.3" r="6.0" fill="rgba(20,225,20,0.6)" stroke="#16c316" stroke-width="1.1"/>
<circle cx="335.0" cy="212.4" r="4.5" fill="rgba(20,225,20,0.6)" stroke="#16c316" stroke-width="1.1"/>
<circle cx="334.0" cy="203.6" r="6.5" fill="rgba(20,225,20,0.6)" stroke="#16c316" stroke-width="1.1"/>
<circle cx="279.5" cy="117.8" r="4.5" fill="rgba(20,225,20,0.6)" stroke="#16c316" stroke-width="1.1"/>
<circle cx="284.5" cy="124.9" r="5.5" fill="rgba(235,15,15,0.62)" stroke="#d00000" stroke-width="1.1"/>
<circle cx="278.9" cy="125.0" r="6.5" fill="rgba(20,225,20,0.6)" stroke="#16c316" stroke-width="1.1"/>
<circle cx="289.1" cy="125.4" r="5.0" fill="rgba(20,225,20,0.6)" stroke="#16c316" stroke-width="1.1"/>
<circle cx="288.0" cy="119.4" r="5.0" fill="rgba(20,225,20,0.6)" stroke="#16c316" stroke-width="1.1"/>
<circle cx="276.8" cy="121.6" r="5.0" fill="rgba(20,225,20,0.6)" stroke="#16c316" stroke-width="1.1"/><path d="M276.8 116.6 A5.0 5.0 0 0 1 276.8 126.6 Z" fill="rgba(215,20,20,0.75)" stroke="#d00000" stroke-width="1"/>
<circle cx="314.8" cy="119.4" r="6.5" fill="rgba(20,225,20,0.6)" stroke="#16c316" stroke-width="1.1"/><path d="M314.8 112.9 A6.5 6.5 0 0 1 314.8 125.9 Z" fill="rgba(215,20,20,0.75)" stroke="#d00000" stroke-width="1"/>
<circle cx="326.2" cy="119.7" r="6.0" fill="rgba(235,15,15,0.62)" stroke="#d00000" stroke-width="1.1"/>
<circle cx="333.5" cy="121.3" r="5.5" fill="rgba(20,225,20,0.6)" stroke="#16c316" stroke-width="1.1"/>
<circle cx="326.2" cy="121.4" r="6.5" fill="rgba(20,225,20,0.6)" stroke="#16c316" stroke-width="1.1"/>
<circle cx="323.8" cy="120.4" r="6.0" fill="rgba(235,15,15,0.62)" stroke="#d00000" stroke-width="1.1"/>
<circle cx="336.7" cy="117.4" r="5.5" fill="rgba(235,15,15,0.62)" stroke="#d00000" stroke-width="1.1"/>
<circle cx="179.3" cy="130.1" r="6.0" fill="rgba(20,225,20,0.6)" stroke="#16c316" stroke-width="1.1"/><path d="M179.3 124.1 A6.0 6.0 0 0 1 179.3 136.1 Z" fill="rgba(215,20,20,0.75)" stroke="#d00000" stroke-width="1"/>
<circle cx="179.7" cy="124.6" r="4.5" fill="rgba(20,225,20,0.6)" stroke="#16c316" stroke-width="1.1"/><path d="M179.7 120.1 A4.5 4.5 0 0 1 179.7 129.1 Z" fill="rgba(215,20,20,0.75)" stroke="#d00000" stroke-width="1"/>
<circle cx="191.2" cy="132.2" r="5.0" fill="rgba(235,15,15,0.62)" stroke="#d00000" stroke-width="1.1"/>
<circle cx="152.8" cy="127.0" r="5.0" fill="rgba(20,225,20,0.6)" stroke="#16c316" stroke-width="1.1"/>
<circle cx="178.0" cy="125.9" r="5.5" fill="rgba(235,15,15,0.62)" stroke="#d00000" stroke-width="1.1"/>
<circle cx="201.3" cy="130.8" r="6.0" fill="rgba(235,15,15,0.62)" stroke="#d00000" stroke-width="1.1"/>
<circle cx="173.9" cy="120.4" r="5.5" fill="rgba(20,225,20,0.6)" stroke="#16c316" stroke-width="1.1"/>
<circle cx="160.0" cy="124.1" r="5.0" fill="rgba(235,15,15,0.62)" stroke="#d00000" stroke-width="1.1"/>
<circle cx="166.5" cy="132.7" r="5.5" fill="rgba(235,15,15,0.62)" stroke="#d00000" stroke-width="1.1"/>
<circle cx="164.0" cy="135.0" r="5.0" fill="rgba(235,15,15,0.62)" stroke="#d00000" stroke-width="1.1"/>
<circle cx="163.2" cy="129.8" r="6.0" fill="rgba(20,225,20,0.6)" stroke="#16c316" stroke-width="1.1"/>
<circle cx="169.3" cy="121.6" r="5.5" fill="rgba(20,225,20,0.6)" stroke="#16c316" stroke-width="1.1"/><path d="M169.3 116.1 A5.5 5.5 0 0 1 169.3 127.1 Z" fill="rgba(215,20,20,0.75)" stroke="#d00000" stroke-width="1"/>
<circle cx="162.1" cy="128.0" r="5.5" fill="rgba(20,225,20,0.6)" stroke="#16c316" stroke-width="1.1"/>
<circle cx="186.2" cy="128.0" r="5.5" fill="rgba(20,225,20,0.6)" stroke="#16c316" stroke-width="1.1"/>
<circle cx="134.4" cy="133.7" r="6.5" fill="rgba(20,225,20,0.6)" stroke="#16c316" stroke-width="1.1"/><path d="M134.4 127.2 A6.5 6.5 0 0 1 134.4 140.2 Z" fill="rgba(215,20,20,0.75)" stroke="#d00000" stroke-width="1"/>
<circle cx="164.8" cy="121.6" r="4.5" fill="rgba(20,225,20,0.6)" stroke="#16c316" stroke-width="1.1"/>
<circle cx="185.1" cy="127.9" r="5.5" fill="rgba(20,225,20,0.6)" stroke="#16c316" stroke-width="1.1"/>
<circle cx="170.7" cy="132.6" r="4.5" fill="rgba(235,15,15,0.62)" stroke="#d00000" stroke-width="1.1"/>
<circle cx="163.5" cy="127.7" r="5.5" fill="rgba(20,225,20,0.6)" stroke="#16c316" stroke-width="1.1"/>
<circle cx="173.1" cy="126.9" r="5.5" fill="rgba(20,225,20,0.6)" stroke="#16c316" stroke-width="1.1"/>
<circle cx="173.8" cy="143.6" r="5.0" fill="rgba(20,225,20,0.6)" stroke="#16c316" stroke-width="1.1"/>
<circle cx="169.9" cy="133.2" r="6.0" fill="rgba(235,15,15,0.62)" stroke="#d00000" stroke-width="1.1"/>
<circle cx="185.7" cy="128.0" r="6.0" fill="rgba(20,225,20,0.6)" stroke="#16c316" stroke-width="1.1"/>
<circle cx="173.4" cy="134.3" r="6.0" fill="rgba(20,225,20,0.6)" stroke="#16c316" stroke-width="1.1"/><path d="M173.4 128.3 A6.0 6.0 0 0 1 173.4 140.3 Z" fill="rgba(215,20,20,0.75)" stroke="#d00000" stroke-width="1"/>
<circle cx="160.8" cy="121.6" r="5.5" fill="rgba(20,225,20,0.6)" stroke="#16c316" stroke-width="1.1"/>
<circle cx="181.9" cy="139.5" r="5.5" fill="rgba(20,225,20,0.6)" stroke="#16c316" stroke-width="1.1"/>
<circle cx="177.5" cy="130.4" r="6.5" fill="rgba(235,15,15,0.62)" stroke="#d00000" stroke-width="1.1"/>
<circle cx="184.6" cy="126.7" r="5.5" fill="rgba(235,15,15,0.62)" stroke="#d00000" stroke-width="1.1"/>
<circle cx="173.4" cy="137.1" r="5.0" fill="rgba(235,15,15,0.62)" stroke="#d00000" stroke-width="1.1"/>
<circle cx="160.8" cy="134.4" r="5.5" fill="rgba(20,225,20,0.6)" stroke="#16c316" stroke-width="1.1"/>
<circle cx="163.1" cy="138.2" r="4.5" fill="rgba(235,15,15,0.62)" stroke="#d00000" stroke-width="1.1"/>
<circle cx="163.0" cy="133.5" r="5.0" fill="rgba(20,225,20,0.6)" stroke="#16c316" stroke-width="1.1"/>
<circle cx="203.2" cy="125.3" r="5.5" fill="rgba(20,225,20,0.6)" stroke="#16c316" stroke-width="1.1"/>
<circle cx="180.0" cy="143.4" r="6.0" fill="rgba(20,225,20,0.6)" stroke="#16c316" stroke-width="1.1"/>
<circle cx="180.7" cy="142.8" r="5.0" fill="rgba(20,225,20,0.6)" stroke="#16c316" stroke-width="1.1"/>
<circle cx="190.0" cy="132.9" r="6.0" fill="rgba(20,225,20,0.6)" stroke="#16c316" stroke-width="1.1"/><path d="M190.0 126.9 A6.0 6.0 0 0 1 190.0 138.9 Z" fill="rgba(215,20,20,0.75)" stroke="#d00000" stroke-width="1"/>
<circle cx="178.0" cy="140.1" r="5.0" fill="rgba(20,225,20,0.6)" stroke="#16c316" stroke-width="1.1"/><path d="M178.0 135.1 A5.0 5.0 0 0 1 178.0 145.1 Z" fill="rgba(215,20,20,0.75)" stroke="#d00000" stroke-width="1"/>
<circle cx="190.2" cy="130.7" r="5.0" fill="rgba(20,225,20,0.6)" stroke="#16c316" stroke-width="1.1"/>
<circle cx="163.1" cy="143.9" r="6.5" fill="rgba(20,225,20,0.6)" stroke="#16c316" stroke-width="1.1"/>
<circle cx="180.9" cy="128.3" r="6.5" fill="rgba(20,225,20,0.6)" stroke="#16c316" stroke-width="1.1"/>
<circle cx="201.8" cy="143.6" r="5.0" fill="rgba(235,15,15,0.62)" stroke="#d00000" stroke-width="1.1"/>
<circle cx="196.3" cy="138.5" r="6.0" fill="rgba(235,15,15,0.62)" stroke="#d00000" stroke-width="1.1"/>
<circle cx="192.6" cy="134.7" r="5.0" fill="rgba(20,225,20,0.6)" stroke="#16c316" stroke-width="1.1"/>
<circle cx="195.1" cy="141.6" r="5.5" fill="rgba(235,15,15,0.62)" stroke="#d00000" stroke-width="1.1"/>
<circle cx="193.7" cy="152.4" r="6.0" fill="rgba(235,15,15,0.62)" stroke="#d00000" stroke-width="1.1"/>
<circle cx="204.0" cy="147.3" r="5.5" fill="rgba(20,225,20,0.6)" stroke="#16c316" stroke-width="1.1"/><path d="M204.0 141.8 A5.5 5.5 0 0 1 204.0 152.8 Z" fill="rgba(215,20,20,0.75)" stroke="#d00000" stroke-width="1"/>
<circle cx="191.2" cy="144.2" r="5.5" fill="rgba(20,225,20,0.6)" stroke="#16c316" stroke-width="1.1"/><path d="M191.2 138.7 A5.5 5.5 0 0 1 191.2 149.7 Z" fill="rgba(215,20,20,0.75)" stroke="#d00000" stroke-width="1"/>
<circle cx="206.0" cy="142.3" r="5.5" fill="rgba(235,15,15,0.62)" stroke="#d00000" stroke-width="1.1"/>
<circle cx="198.8" cy="140.1" r="5.0" fill="rgba(20,225,20,0.6)" stroke="#16c316" stroke-width="1.1"/><path d="M198.8 135.1 A5.0 5.0 0 0 1 198.8 145.1 Z" fill="rgba(215,20,20,0.75)" stroke="#d00000" stroke-width="1"/>
<circle cx="199.4" cy="144.8" r="6.0" fill="rgba(20,225,20,0.6)" stroke="#16c316" stroke-width="1.1"/>
<circle cx="203.0" cy="151.4" r="4.5" fill="rgba(20,225,20,0.6)" stroke="#16c316" stroke-width="1.1"/>
<circle cx="204.9" cy="138.8" r="4.5" fill="rgba(20,225,20,0.6)" stroke="#16c316" stroke-width="1.1"/><path d="M204.9 134.3 A4.5 4.5 0 0 1 204.9 143.3 Z" fill="rgba(215,20,20,0.75)" stroke="#d00000" stroke-width="1"/>
<circle cx="164.5" cy="160.0" r="5.5" fill="rgba(235,15,15,0.62)" stroke="#d00000" stroke-width="1.1"/>
<circle cx="167.8" cy="158.3" r="5.5" fill="rgba(235,15,15,0.62)" stroke="#d00000" stroke-width="1.1"/>
<circle cx="163.2" cy="159.6" r="6.5" fill="rgba(235,15,15,0.62)" stroke="#d00000" stroke-width="1.1"/>
<circle cx="169.9" cy="159.4" r="5.5" fill="rgba(235,15,15,0.62)" stroke="#d00000" stroke-width="1.1"/>
<circle cx="166.3" cy="157.9" r="5.5" fill="rgba(235,15,15,0.62)" stroke="#d00000" stroke-width="1.1"/>
<circle cx="164.5" cy="156.0" r="5.0" fill="rgba(235,15,15,0.62)" stroke="#d00000" stroke-width="1.1"/>
<circle cx="128.9" cy="95.3" r="5.5" fill="rgba(20,225,20,0.6)" stroke="#16c316" stroke-width="1.1"/>
<circle cx="131.9" cy="94.4" r="5.0" fill="rgba(235,15,15,0.62)" stroke="#d00000" stroke-width="1.1"/>
<circle cx="121.8" cy="94.8" r="5.5" fill="rgba(20,225,20,0.6)" stroke="#16c316" stroke-width="1.1"/>
<circle cx="131.1" cy="95.5" r="5.5" fill="rgba(235,15,15,0.62)" stroke="#d00000" stroke-width="1.1"/>
<circle cx="122.9" cy="97.1" r="5.5" fill="rgba(20,225,20,0.6)" stroke="#16c316" stroke-width="1.1"/>
<circle cx="128.7" cy="96.5" r="4.5" fill="rgba(20,225,20,0.6)" stroke="#16c316" stroke-width="1.1"/><path d="M128.7 92.0 A4.5 4.5 0 0 1 128.7 101.0 Z" fill="rgba(215,20,20,0.75)" stroke="#d00000" stroke-width="1"/>
<circle cx="163.2" cy="77.4" r="6.5" fill="rgba(20,225,20,0.6)" stroke="#16c316" stroke-width="1.1"/>
<circle cx="167.0" cy="78.3" r="5.5" fill="rgba(235,15,15,0.62)" stroke="#d00000" stroke-width="1.1"/>
<circle cx="165.7" cy="82.8" r="5.5" fill="rgba(20,225,20,0.6)" stroke="#16c316" stroke-width="1.1"/>
<circle cx="168.5" cy="75.5" r="6.0" fill="rgba(20,225,20,0.6)" stroke="#16c316" stroke-width="1.1"/>
<circle cx="169.5" cy="81.0" r="5.0" fill="rgba(20,225,20,0.6)" stroke="#16c316" stroke-width="1.1"/>
<circle cx="164.9" cy="75.6" r="5.5" fill="rgba(235,15,15,0.62)" stroke="#d00000" stroke-width="1.1"/>
<circle cx="164.6" cy="80.5" r="5.0" fill="rgba(20,225,20,0.6)" stroke="#16c316" stroke-width="1.1"/>
<circle cx="170.1" cy="78.6" r="6.5" fill="rgba(20,225,20,0.6)" stroke="#16c316" stroke-width="1.1"/>
<circle cx="202.0" cy="201.8" r="5.5" fill="rgba(20,225,20,0.6)" stroke="#16c316" stroke-width="1.1"/>
<circle cx="198.6" cy="202.0" r="5.5" fill="rgba(20,225,20,0.6)" stroke="#16c316" stroke-width="1.1"/>
<circle cx="202.5" cy="204.8" r="5.0" fill="rgba(20,225,20,0.6)" stroke="#16c316" stroke-width="1.1"/>
<circle cx="215.7" cy="198.2" r="6.0" fill="rgba(20,225,20,0.6)" stroke="#16c316" stroke-width="1.1"/><path d="M215.7 192.2 A6.0 6.0 0 0 1 215.7 204.2 Z" fill="rgba(215,20,20,0.75)" stroke="#d00000" stroke-width="1"/>
<circle cx="199.0" cy="196.2" r="5.0" fill="rgba(20,225,20,0.6)" stroke="#16c316" stroke-width="1.1"/>
<circle cx="208.4" cy="206.8" r="5.5" fill="rgba(20,225,20,0.6)" stroke="#16c316" stroke-width="1.1"/>
<circle cx="186.1" cy="225.1" r="5.0" fill="rgba(20,225,20,0.6)" stroke="#16c316" stroke-width="1.1"/><path d="M186.1 220.1 A5.0 5.0 0 0 1 186.1 230.1 Z" fill="rgba(215,20,20,0.75)" stroke="#d00000" stroke-width="1"/>
<circle cx="185.2" cy="225.4" r="5.0" fill="rgba(235,15,15,0.62)" stroke="#d00000" stroke-width="1.1"/>
<circle cx="182.3" cy="225.7" r="5.0" fill="rgba(20,225,20,0.6)" stroke="#16c316" stroke-width="1.1"/>
<circle cx="189.4" cy="221.8" r="5.0" fill="rgba(235,15,15,0.62)" stroke="#d00000" stroke-width="1.1"/>
<circle cx="177.6" cy="232.8" r="5.5" fill="rgba(235,15,15,0.62)" stroke="#d00000" stroke-width="1.1"/>
<circle cx="186.6" cy="228.5" r="5.0" fill="rgba(235,15,15,0.62)" stroke="#d00000" stroke-width="1.1"/>
<circle cx="483.2" cy="138.5" r="5.0" fill="rgba(20,225,20,0.6)" stroke="#16c316" stroke-width="1.1"/>
<circle cx="476.2" cy="132.1" r="5.5" fill="rgba(20,225,20,0.6)" stroke="#16c316" stroke-width="1.1"/>
<circle cx="500.7" cy="139.5" r="6.5" fill="rgba(20,225,20,0.6)" stroke="#16c316" stroke-width="1.1"/>
<circle cx="479.5" cy="137.8" r="4.5" fill="rgba(20,225,20,0.6)" stroke="#16c316" stroke-width="1.1"/>
<circle cx="483.6" cy="145.1" r="4.5" fill="rgba(20,225,20,0.6)" stroke="#16c316" stroke-width="1.1"/>
<circle cx="487.5" cy="130.0" r="5.5" fill="rgba(20,225,20,0.6)" stroke="#16c316" stroke-width="1.1"/><path d="M487.5 124.5 A5.5 5.5 0 0 1 487.5 135.5 Z" fill="rgba(215,20,20,0.75)" stroke="#d00000" stroke-width="1"/>
<circle cx="486.6" cy="133.5" r="5.0" fill="rgba(235,15,15,0.62)" stroke="#d00000" stroke-width="1.1"/>
<circle cx="486.0" cy="125.6" r="5.0" fill="rgba(20,225,20,0.6)" stroke="#16c316" stroke-width="1.1"/>
<circle cx="485.0" cy="121.9" r="4.5" fill="rgba(20,225,20,0.6)" stroke="#16c316" stroke-width="1.1"/><path d="M485.0 117.4 A4.5 4.5 0 0 1 485.0 126.4 Z" fill="rgba(215,20,20,0.75)" stroke="#d00000" stroke-width="1"/>
<circle cx="492.9" cy="132.2" r="6.5" fill="rgba(20,225,20,0.6)" stroke="#16c316" stroke-width="1.1"/>
<circle cx="481.4" cy="152.8" r="5.5" fill="rgba(20,225,20,0.6)" stroke="#16c316" stroke-width="1.1"/>
<circle cx="484.3" cy="150.9" r="5.5" fill="rgba(235,15,15,0.62)" stroke="#d00000" stroke-width="1.1"/>
<circle cx="494.6" cy="149.2" r="4.5" fill="rgba(235,15,15,0.62)" stroke="#d00000" stroke-width="1.1"/>
<circle cx="479.9" cy="145.1" r="6.0" fill="rgba(235,15,15,0.62)" stroke="#d00000" stroke-width="1.1"/>
<circle cx="486.2" cy="133.7" r="6.0" fill="rgba(20,225,20,0.6)" stroke="#16c316" stroke-width="1.1"/>
<circle cx="475.6" cy="152.1" r="6.5" fill="rgba(235,15,15,0.62)" stroke="#d00000" stroke-width="1.1"/>
<circle cx="486.0" cy="131.7" r="5.5" fill="rgba(20,225,20,0.6)" stroke="#16c316" stroke-width="1.1"/>
<circle cx="485.6" cy="143.1" r="5.0" fill="rgba(20,225,20,0.6)" stroke="#16c316" stroke-width="1.1"/>
<circle cx="488.5" cy="142.4" r="4.5" fill="rgba(20,225,20,0.6)" stroke="#16c316" stroke-width="1.1"/>
<circle cx="486.7" cy="140.1" r="6.5" fill="rgba(20,225,20,0.6)" stroke="#16c316" stroke-width="1.1"/><path d="M486.7 133.6 A6.5 6.5 0 0 1 486.7 146.6 Z" fill="rgba(215,20,20,0.75)" stroke="#d00000" stroke-width="1"/>
<circle cx="484.3" cy="151.9" r="6.5" fill="rgba(235,15,15,0.62)" stroke="#d00000" stroke-width="1.1"/>
<circle cx="483.4" cy="128.4" r="6.5" fill="rgba(20,225,20,0.6)" stroke="#16c316" stroke-width="1.1"/>
<circle cx="514.0" cy="167.1" r="4.5" fill="rgba(20,225,20,0.6)" stroke="#16c316" stroke-width="1.1"/>
<circle cx="519.1" cy="164.9" r="5.5" fill="rgba(20,225,20,0.6)" stroke="#16c316" stroke-width="1.1"/>
<circle cx="509.0" cy="165.7" r="5.0" fill="rgba(235,15,15,0.62)" stroke="#d00000" stroke-width="1.1"/>
<circle cx="517.3" cy="160.9" r="6.5" fill="rgba(235,15,15,0.62)" stroke="#d00000" stroke-width="1.1"/>
<circle cx="510.3" cy="159.7" r="4.5" fill="rgba(20,225,20,0.6)" stroke="#16c316" stroke-width="1.1"/>
<circle cx="523.9" cy="158.4" r="5.5" fill="rgba(20,225,20,0.6)" stroke="#16c316" stroke-width="1.1"/>
<circle cx="510.3" cy="157.6" r="6.0" fill="rgba(20,225,20,0.6)" stroke="#16c316" stroke-width="1.1"/><path d="M510.3 151.6 A6.0 6.0 0 0 1 510.3 163.6 Z" fill="rgba(215,20,20,0.75)" stroke="#d00000" stroke-width="1"/>
<circle cx="516.0" cy="161.0" r="4.5" fill="rgba(20,225,20,0.6)" stroke="#16c316" stroke-width="1.1"/><path d="M516.0 156.5 A4.5 4.5 0 0 1 516.0 165.5 Z" fill="rgba(215,20,20,0.75)" stroke="#d00000" stroke-width="1"/>
<circle cx="572.2" cy="176.3" r="6.5" fill="rgba(235,15,15,0.62)" stroke="#d00000" stroke-width="1.1"/>
<circle cx="567.8" cy="174.4" r="5.0" fill="rgba(235,15,15,0.62)" stroke="#d00000" stroke-width="1.1"/>
<circle cx="578.2" cy="174.5" r="5.0" fill="rgba(235,15,15,0.62)" stroke="#d00000" stroke-width="1.1"/>
<circle cx="572.3" cy="177.6" r="5.0" fill="rgba(20,225,20,0.6)" stroke="#16c316" stroke-width="1.1"/>
<circle cx="568.9" cy="175.5" r="5.0" fill="rgba(235,15,15,0.62)" stroke="#d00000" stroke-width="1.1"/>
<circle cx="571.9" cy="172.4" r="4.5" fill="rgba(20,225,20,0.6)" stroke="#16c316" stroke-width="1.1"/>
<circle cx="473.5" cy="69.5" r="5.5" fill="rgba(235,15,15,0.62)" stroke="#d00000" stroke-width="1.1"/>
<circle cx="484.1" cy="73.7" r="5.5" fill="rgba(20,225,20,0.6)" stroke="#16c316" stroke-width="1.1"/>
<circle cx="479.4" cy="71.5" r="5.0" fill="rgba(20,225,20,0.6)" stroke="#16c316" stroke-width="1.1"/>
<circle cx="477.0" cy="76.2" r="5.5" fill="rgba(20,225,20,0.6)" stroke="#16c316" stroke-width="1.1"/><path d="M477.0 70.7 A5.5 5.5 0 0 1 477.0 81.7 Z" fill="rgba(215,20,20,0.75)" stroke="#d00000" stroke-width="1"/>
<circle cx="480.3" cy="73.9" r="5.0" fill="rgba(20,225,20,0.6)" stroke="#16c316" stroke-width="1.1"/>
<circle cx="264.0" cy="14.0" r="6.0" fill="rgba(235,15,15,0.62)" stroke="#d00000" stroke-width="1.1"/>
<circle cx="291.7" cy="21.6" r="6.5" fill="rgba(20,225,20,0.6)" stroke="#16c316" stroke-width="1.1"/><path d="M291.7 15.1 A6.5 6.5 0 0 1 291.7 28.1 Z" fill="rgba(215,20,20,0.75)" stroke="#d00000" stroke-width="1"/>
<circle cx="91.0" cy="63.0" r="6.0" fill="rgba(235,15,15,0.62)" stroke="#d00000" stroke-width="1.1"/>
<circle cx="93.0" cy="68.0" r="6.0" fill="rgba(20,225,20,0.6)" stroke="#16c316" stroke-width="1.1"/>
<circle cx="93.0" cy="89.0" r="6.0" fill="#b35c2c" stroke="#d00000" stroke-width="1.1"/>
<circle cx="100.0" cy="97.0" r="6.0" fill="rgba(235,15,15,0.62)" stroke="#d00000" stroke-width="1.1"/>
<circle cx="110.0" cy="100.0" r="6.0" fill="rgba(235,15,15,0.62)" stroke="#d00000" stroke-width="1.1"/>
<circle cx="140.0" cy="88.0" r="6.0" fill="rgba(235,15,15,0.62)" stroke="#d00000" stroke-width="1.1"/>
<circle cx="212.0" cy="66.0" r="6.5" fill="rgba(20,225,20,0.6)" stroke="#16c316" stroke-width="1.1"/><path d="M212.0 59.5 A6.5 6.5 0 0 1 212.0 72.5 Z" fill="rgba(215,20,20,0.75)" stroke="#d00000" stroke-width="1"/>
<circle cx="209.0" cy="63.0" r="6.0" fill="rgba(20,225,20,0.6)" stroke="#16c316" stroke-width="1.1"/>
<circle cx="173.0" cy="115.0" r="6.0" fill="rgba(235,15,15,0.62)" stroke="#d00000" stroke-width="1.1"/>
<circle cx="242.6" cy="171.7" r="6.0" fill="rgba(20,225,20,0.6)" stroke="#16c316" stroke-width="1.1"/>
<circle cx="186.0" cy="186.6" r="6.0" fill="rgba(20,225,20,0.6)" stroke="#16c316" stroke-width="1.1"/>
<circle cx="217.6" cy="186.6" r="6.5" fill="rgba(20,225,20,0.6)" stroke="#16c316" stroke-width="1.1"/><path d="M217.6 180.1 A6.5 6.5 0 0 1 217.6 193.1 Z" fill="rgba(215,20,20,0.75)" stroke="#d00000" stroke-width="1"/>
<circle cx="230.0" cy="195.0" r="6.0" fill="rgba(235,15,15,0.62)" stroke="#d00000" stroke-width="1.1"/>
<circle cx="191.8" cy="201.0" r="6.0" fill="rgba(20,225,20,0.6)" stroke="#16c316" stroke-width="1.1"/>
<circle cx="207.6" cy="199.5" r="6.0" fill="rgba(20,225,20,0.6)" stroke="#16c316" stroke-width="1.1"/>
<circle cx="207.6" cy="206.7" r="6.0" fill="rgba(20,225,20,0.6)" stroke="#16c316" stroke-width="1.1"/>
<circle cx="220.0" cy="204.4" r="6.0" fill="rgba(20,225,20,0.6)" stroke="#16c316" stroke-width="1.1"/>
<circle cx="181.7" cy="219.6" r="6.0" fill="rgba(20,225,20,0.6)" stroke="#16c316" stroke-width="1.1"/>
<circle cx="176.0" cy="226.8" r="6.0" fill="rgba(235,15,15,0.62)" stroke="#d00000" stroke-width="1.1"/>
<circle cx="181.7" cy="232.5" r="6.0" fill="rgba(235,15,15,0.62)" stroke="#d00000" stroke-width="1.1"/>
<circle cx="199.0" cy="218.0" r="6.0" fill="rgba(235,15,15,0.62)" stroke="#d00000" stroke-width="1.1"/>
<circle cx="206.0" cy="222.5" r="6.0" fill="rgba(20,225,20,0.6)" stroke="#16c316" stroke-width="1.1"/>
<circle cx="179.7" cy="247.0" r="6.0" fill="rgba(20,225,20,0.6)" stroke="#16c316" stroke-width="1.1"/>
<circle cx="7.5" cy="182.0" r="6.0" fill="#b35c2c" stroke="#d00000" stroke-width="1.1"/>
<circle cx="3.8" cy="195.0" r="6.5" fill="rgba(20,225,20,0.6)" stroke="#16c316" stroke-width="1.1"/><path d="M3.8 188.5 A6.5 6.5 0 0 1 3.8 201.5 Z" fill="rgba(215,20,20,0.75)" stroke="#d00000" stroke-width="1"/>
<circle cx="411.0" cy="3.0" r="6.5" fill="rgba(20,225,20,0.6)" stroke="#16c316" stroke-width="1.1"/><path d="M411.0 -3.5 A6.5 6.5 0 0 1 411.0 9.5 Z" fill="rgba(215,20,20,0.75)" stroke="#d00000" stroke-width="1"/>
<circle cx="428.6" cy="59.7" r="6.0" fill="rgba(20,225,20,0.6)" stroke="#16c316" stroke-width="1.1"/>
<circle cx="484.6" cy="60.0" r="6.0" fill="rgba(20,225,20,0.6)" stroke="#16c316" stroke-width="1.1"/>
<circle cx="489.0" cy="69.0" r="6.0" fill="rgba(20,225,20,0.6)" stroke="#16c316" stroke-width="1.1"/>
<circle cx="499.8" cy="63.7" r="6.0" fill="rgba(20,225,20,0.6)" stroke="#16c316" stroke-width="1.1"/>
<circle cx="425.7" cy="116.0" r="6.0" fill="rgba(20,225,20,0.6)" stroke="#16c316" stroke-width="1.1"/>
<circle cx="428.6" cy="123.0" r="6.0" fill="rgba(20,225,20,0.6)" stroke="#16c316" stroke-width="1.1"/>
<circle cx="441.5" cy="146.0" r="6.0" fill="rgba(20,225,20,0.6)" stroke="#16c316" stroke-width="1.1"/>
<circle cx="496.6" cy="93.0" r="6.0" fill="rgba(20,225,20,0.6)" stroke="#16c316" stroke-width="1.1"/>
<circle cx="519.8" cy="80.0" r="6.0" fill="rgba(20,225,20,0.6)" stroke="#16c316" stroke-width="1.1"/>
<circle cx="521.8" cy="89.0" r="6.0" fill="rgba(235,15,15,0.62)" stroke="#d00000" stroke-width="1.1"/>
<circle cx="542.5" cy="92.4" r="6.0" fill="rgba(20,225,20,0.6)" stroke="#16c316" stroke-width="1.1"/>
<circle cx="509.0" cy="129.0" r="6.0" fill="rgba(235,15,15,0.62)" stroke="#d00000" stroke-width="1.1"/>
<circle cx="517.6" cy="143.5" r="6.0" fill="rgba(235,15,15,0.62)" stroke="#d00000" stroke-width="1.1"/>
<circle cx="540.0" cy="142.0" r="6.5" fill="rgba(20,225,20,0.6)" stroke="#16c316" stroke-width="1.1"/><path d="M540.0 135.5 A6.5 6.5 0 0 1 540.0 148.5 Z" fill="rgba(215,20,20,0.75)" stroke="#d00000" stroke-width="1"/>
<circle cx="588.7" cy="159.3" r="6.0" fill="#b35c2c" stroke="#d00000" stroke-width="1.1"/>
<circle cx="589.0" cy="185.0" r="6.0" fill="rgba(20,225,20,0.6)" stroke="#16c316" stroke-width="1.1"/>
<circle cx="588.0" cy="196.6" r="6.0" fill="rgba(20,225,20,0.6)" stroke="#16c316" stroke-width="1.1"/>
<circle cx="498.0" cy="199.5" r="6.0" fill="rgba(20,225,20,0.6)" stroke="#16c316" stroke-width="1.1"/>
<circle cx="557.7" cy="218.7" r="6.0" fill="rgba(20,225,20,0.6)" stroke="#16c316" stroke-width="1.1"/>
<circle cx="562.9" cy="218.7" r="6.0" fill="rgba(20,225,20,0.6)" stroke="#16c316" stroke-width="1.1"/>
<circle cx="600.8" cy="224.4" r="6.0" fill="rgba(20,225,20,0.6)" stroke="#16c316" stroke-width="1.1"/>
<circle cx="591.6" cy="248.8" r="6.0" fill="rgba(20,225,20,0.6)" stroke="#16c316" stroke-width="1.1"/>
<circle cx="339.6" cy="216.7" r="6.0" fill="rgba(235,15,15,0.62)" stroke="#d00000" stroke-width="1.1"/>
<circle cx="345.4" cy="201.0" r="6.0" fill="rgba(235,15,15,0.62)" stroke="#d00000" stroke-width="1.1"/>
<circle cx="401.0" cy="194.6" r="6.0" fill="#b35c2c" stroke="#d00000" stroke-width="1.1"/>
<circle cx="387.0" cy="191.7" r="6.0" fill="rgba(20,225,20,0.6)" stroke="#16c316" stroke-width="1.1"/>
<circle cx="379.0" cy="179.4" r="6.0" fill="rgba(20,225,20,0.6)" stroke="#16c316" stroke-width="1.1"/>
<circle cx="370.0" cy="170.0" r="6.0" fill="rgba(20,225,20,0.6)" stroke="#16c316" stroke-width="1.1"/>
<circle cx="321.0" cy="56.0" r="6.5" fill="rgba(20,225,20,0.6)" stroke="#16c316" stroke-width="1.1"/><path d="M321.0 49.5 A6.5 6.5 0 0 1 321.0 62.5 Z" fill="rgba(215,20,20,0.75)" stroke="#d00000" stroke-width="1"/>
<circle cx="290.8" cy="97.6" r="6.0" fill="rgba(20,225,20,0.6)" stroke="#16c316" stroke-width="1.1"/>
<circle cx="288.0" cy="86.0" r="6.0" fill="rgba(235,15,15,0.62)" stroke="#d00000" stroke-width="1.1"/>
<circle cx="275.0" cy="122.0" r="6.0" fill="rgba(20,225,20,0.6)" stroke="#16c316" stroke-width="1.1"/>
<circle cx="280.8" cy="119.0" r="6.0" fill="rgba(20,225,20,0.6)" stroke="#16c316" stroke-width="1.1"/>
<circle cx="321.0" cy="56.0" r="12.0" fill="rgba(20,225,20,0.6)" stroke="#16c316" stroke-width="1.1"/><path d="M321.0 44.0 A12.0 12.0 0 0 1 321.0 68.0 Z" fill="rgba(215,20,20,0.75)" stroke="#d00000" stroke-width="1"/>
<text x="160" y="55" text-anchor="middle" style="font-family:Liberation Sans,sans-serif;font-size:13.5px;font-weight:bold;fill:#333;stroke:#fff;stroke-width:2px;paint-order:stroke">NORTH AMERICA</text>
<text x="362" y="62" text-anchor="middle" style="font-family:Liberation Sans,sans-serif;font-size:13.5px;font-weight:bold;fill:#333;stroke:#fff;stroke-width:2px;paint-order:stroke">EUROPE</text>
<text x="245" y="192" text-anchor="middle" style="font-family:Liberation Sans,sans-serif;font-size:13.5px;font-weight:bold;fill:#333;stroke:#fff;stroke-width:2px;paint-order:stroke">SOUTH AMERICA</text>
<text x="490" y="50" text-anchor="middle" style="font-family:Liberation Sans,sans-serif;font-size:13.5px;font-weight:bold;fill:#333;stroke:#fff;stroke-width:2px;paint-order:stroke">ASIA</text>
<text x="563" y="204" text-anchor="middle" style="font-family:Liberation Sans,sans-serif;font-size:13.5px;font-weight:bold;fill:#333;stroke:#fff;stroke-width:2px;paint-order:stroke">AUSTRALIA</text>
<g transform="translate(6,237)"><rect x="0" y="0" width="5" height="5" fill="#f25022"/><rect x="6" y="0" width="5" height="5" fill="#7fba00"/><rect x="0" y="6" width="5" height="5" fill="#00a4ef"/><rect x="6" y="6" width="5" height="5" fill="#ffb900"/></g>
<text x="19" y="247" style="font-family:Liberation Sans,sans-serif;font-size:11px;fill:#777">Microsoft Bing</text>
<text x="217" y="250" style="font-family:Liberation Sans,sans-serif;font-size:11px;fill:#222;stroke:#fff;stroke-width:2px;paint-order:stroke">© 2025 TomTom, © 2025 Microsoft Corporation, <tspan style="fill:#2a4aa0;text-decoration:underline">© OpenStreetMap</tspan><tspan dx="8" style="fill:#2a4aa0;text-decoration:underline">Terms</tspan></text>
</svg>
<div class="card" style="left:250px;top:561px;width:1305px;height:355px;"><div class="ttl" style="top:0;height:40px;line-height:38px;">User Login Details</div>
</div>
<div class="abs" style="left:255px;top:608px;width:192px;height:38px;background:#dee2e6"></div>
<div class="tx" style="left:255px;width:192px;top:614px;line-height:20px;text-align:center;font-size:15px;color:#24466e;letter-spacing:0.3px;overflow:hidden">Name</div>
<div class="abs" style="left:448px;top:608px;width:293px;height:38px;background:#dee2e6"></div>
<div class="tx" style="left:448px;width:293px;top:614px;line-height:20px;text-align:center;font-size:15px;color:#24466e;letter-spacing:0.3px;overflow:hidden">App Display Name</div>
<div class="abs" style="left:742px;top:608px;width:128px;height:38px;background:#dee2e6"></div>
<div class="tx" style="left:742px;width:128px;top:614px;line-height:20px;text-align:center;font-size:15px;color:#24466e;letter-spacing:0.3px;overflow:hidden">Client App Used</div>
<div class="abs" style="left:871px;top:608px;width:194px;height:38px;background:#dee2e6"></div>
<div class="tx" style="left:871px;width:194px;top:614px;line-height:20px;text-align:center;font-size:15px;color:#24466e;letter-spacing:0.3px;overflow:hidden">Conditional Access Status</div>
<div class="abs" style="left:1066px;top:608px;width:232px;height:38px;background:#dee2e6"></div>
<div class="tx" style="left:1066px;width:232px;top:614px;line-height:20px;text-align:center;font-size:15px;color:#24466e;letter-spacing:0.3px;overflow:hidden">City</div>
<div class="abs" style="left:1299px;top:608px;width:48px;height:38px;background:#dee2e6"></div>
<div class="tx" style="left:1299px;width:48px;top:614px;line-height:20px;text-align:center;font-size:15px;color:#24466e;letter-spacing:0.3px;overflow:hidden">State</div>
<div class="abs" style="left:1348px;top:608px;width:176px;height:38px;background:#dee2e6"></div>
<div class="tx" style="left:1348px;width:176px;top:614px;line-height:20px;text-align:center;font-size:15px;color:#24466e;letter-spacing:0.3px;overflow:hidden">Country</div>
<div class="abs" style="left:1525px;top:608px;width:16px;height:38px;background:#dee2e6"></div>
<div class="tx" style="left:1525px;width:16px;top:614px;line-height:20px;text-align:center;font-size:15px;color:#24466e;letter-spacing:0.3px;overflow:hidden"></div>
<div class="abs" style="left:255px;top:646px;width:1286px;height:256px;overflow:hidden">
<div class="abs" style="left:0px;top:0px;width:192px;height:29px;background:#fff;"></div>
<div class="abs" style="left:193px;top:0px;width:293px;height:29px;background:#fff;"></div>
<div class="abs" style="left:487px;top:0px;width:128px;height:29px;background:#fff;"></div>
<div class="abs" style="left:616px;top:0px;width:194px;height:29px;background:#fff;"></div>
<div class="abs" style="left:811px;top:0px;width:232px;height:29px;background:#fff;"></div>
<div class="abs" style="left:1044px;top:0px;width:48px;height:29px;background:#fff;"></div>
<div class="abs" style="left:1093px;top:0px;width:176px;height:29px;background:#fff;"></div>
<div class="abs" style="left:1270px;top:0px;width:16px;height:29px;background:#fff;"></div>
<div class="tx tb" style="left:6px;top:3px;line-height:22px;font-size:16.5px;color:#0c3f7a;letter-spacing:0.78px">Aaliyah Dare-Schaden</div>
<div class="tx tb" style="left:199px;top:3px;line-height:22px;font-size:16.5px;color:#0c3f7a;letter-spacing:0.78px">Dare LLC</div>
<div class="tx tb" style="left:493px;top:3px;line-height:22px;font-size:16.5px;color:#0c3f7a;letter-spacing:0.78px">Web</div>
<div class="tx tb" style="left:622px;top:3px;line-height:22px;font-size:16.5px;color:#0c3f7a;letter-spacing:0.78px">Success</div>
<div class="tx tb" style="left:817px;top:3px;line-height:22px;font-size:16.5px;color:#0c3f7a;letter-spacing:0.78px">Gerzen</div>
<div class="tx tb" style="left:1050px;top:3px;line-height:22px;font-size:16.5px;color:#0c3f7a;letter-spacing:0.78px"></div>
<div class="tx tb" style="left:1099px;top:3px;line-height:22px;font-size:16.5px;color:#0c3f7a;letter-spacing:0.78px">Germany</div>
<div class="tx tb" style="left:1276px;top:3px;line-height:22px;font-size:16.5px;color:#0c3f7a;letter-spacing:0.78px">I</div>
<div class="abs" style="left:0px;top:28px;width:192px;height:28px;background:#e6e6e6;border-top:1px solid #4a8ae0;"></div>
<div class="abs" style="left:193px;top:28px;width:293px;height:28px;background:#e6e6e6;border-top:1px solid #4a8ae0;"></div>
<div class="abs" style="left:487px;top:28px;width:128px;height:28px;background:#e6e6e6;border-top:1px solid #4a8ae0;"></div>
<div class="abs" style="left:616px;top:28px;width:194px;height:28px;background:#e6e6e6;border-top:1px solid #4a8ae0;"></div>
<div class="abs" style="left:811px;top:28px;width:232px;height:28px;background:#e6e6e6;border-top:1px solid #4a8ae0;"></div>
<div class="abs" style="left:1044px;top:28px;width:48px;height:28px;background:#e6e6e6;border-top:1px solid #4a8ae0;"></div>
<div class="abs" style="left:1093px;top:28px;width:176px;height:28px;background:#e6e6e6;border-top:1px solid #4a8ae0;"></div>
<div class="abs" style="left:1270px;top:28px;width:16px;height:28px;background:#e6e6e6;border-top:1px solid #4a8ae0;"></div>
<div class="tx tb" style="left:6px;top:31px;line-height:22px;font-size:16.5px;color:#1f6bc4;letter-spacing:0.78px">Aaliyah Dare-Schaden</div>
<div class="tx tb" style="left:199px;top:31px;line-height:22px;font-size:16.5px;color:#1f6bc4;letter-spacing:0.78px">Gorczany - Morar</div>
<div class="tx tb" style="left:493px;top:31px;line-height:22px;font-size:16.5px;color:#1f6bc4;letter-spacing:0.78px">Web</div>
<div class="tx tb" style="left:622px;top:31px;line-height:22px;font-size:16.5px;color:#1f6bc4;letter-spacing:0.78px">Failure</div>
<div class="tx tb" style="left:817px;top:31px;line-height:22px;font-size:16.5px;color:#1f6bc4;letter-spacing:0.78px">Sulzfeld am Main</div>
<div class="tx tb" style="left:1050px;top:31px;line-height:22px;font-size:16.5px;color:#1f6bc4;letter-spacing:0.78px"></div>
<div class="tx tb" style="left:1099px;top:31px;line-height:22px;font-size:16.5px;color:#1f6bc4;letter-spacing:0.78px">Germany</div>
<div class="tx tb" style="left:1276px;top:31px;line-height:22px;font-size:16.5px;color:#1f6bc4;letter-spacing:0.78px">A</div>
<div class="abs" style="left:0px;top:55px;width:192px;height:87px;background:#fff;border-top:1px solid #4a8ae0;"></div>
<div class="abs" style="left:193px;top:55px;width:293px;height:87px;background:#fff;border-top:1px solid #4a8ae0;"></div>
<div class="abs" style="left:487px;top:55px;width:128px;height:87px;background:#fff;border-top:1px solid #4a8ae0;"></div>
<div class="abs" style="left:616px;top:55px;width:194px;height:87px;background:#fff;border-top:1px solid #4a8ae0;"></div>
<div class="abs" style="left:811px;top:55px;width:232px;height:87px;background:#fff;border-top:1px solid #4a8ae0;"></div>
<div class="abs" style="left:1044px;top:55px;width:48px;height:87px;background:#fff;border-top:1px solid #4a8ae0;"></div>
<div class="abs" style="left:1093px;top:55px;width:176px;height:87px;background:#fff;border-top:1px solid #4a8ae0;"></div>
<div class="abs" style="left:1270px;top:55px;width:16px;height:87px;background:#fff;border-top:1px solid #4a8ae0;"></div>
<div class="tx tb" style="left:6px;top:58px;line-height:22px;font-size:16.5px;color:#0c3f7a;letter-spacing:0.78px">Aaliyah Dare-Schaden</div>
<div class="tx tb" style="left:199px;top:58px;line-height:22px;font-size:16.5px;color:#0c3f7a;letter-spacing:0.78px">Tremblay, Anderson and Bahringer</div>
<div class="tx tb" style="left:493px;top:58px;line-height:22px;font-size:16.5px;color:#0c3f7a;letter-spacing:0.78px">Mobile</div>
<div class="tx tb" style="left:622px;top:58px;line-height:22px;font-size:16.5px;color:#0c3f7a;letter-spacing:0.78px">Failure</div>
<div class="tx tb" style="left:817px;top:58px;line-height:22px;font-size:16.5px;color:#0c3f7a;letter-spacing:0.78px">Boos</div>
<div class="tx tb" style="left:1050px;top:58px;line-height:22px;font-size:16.5px;color:#0c3f7a;letter-spacing:0.78px"></div>
<div class="tx tb" style="left:1099px;top:58px;line-height:22px;font-size:16.5px;color:#0c3f7a;letter-spacing:0.78px">Germany</div>
<div class="tx tb" style="left:1276px;top:58px;line-height:22px;font-size:16.5px;color:#0c3f7a;letter-spacing:0.78px">H</div>
<div class="abs" style="left:0px;top:141px;width:192px;height:28px;background:#e6e6e6;border-top:1px solid #4a8ae0;"></div>
<div class="abs" style="left:193px;top:141px;width:293px;height:28px;background:#e6e6e6;border-top:1px solid #4a8ae0;"></div>
<div class="abs" style="left:487px;top:141px;width:128px;height:28px;background:#e6e6e6;border-top:1px solid #4a8ae0;"></div>
<div class="abs" style="left:616px;top:141px;width:194px;height:28px;background:#e6e6e6;border-top:1px solid #4a8ae0;"></div>
<div class="abs" style="left:811px;top:141px;width:232px;height:28px;background:#e6e6e6;border-top:1px solid #4a8ae0;"></div>
<div class="abs" style="left:1044px;top:141px;width:48px;height:28px;background:#e6e6e6;border-top:1px solid #4a8ae0;"></div>
<div class="abs" style="left:1093px;top:141px;width:176px;height:28px;background:#e6e6e6;border-top:1px solid #4a8ae0;"></div>
<div class="abs" style="left:1270px;top:141px;width:16px;height:28px;background:#e6e6e6;border-top:1px solid #4a8ae0;"></div>
<div class="tx tb" style="left:6px;top:144px;line-height:22px;font-size:16.5px;color:#1f6bc4;letter-spacing:0.78px">Abagail Gulgowski</div>
<div class="tx tb" style="left:199px;top:144px;line-height:22px;font-size:16.5px;color:#1f6bc4;letter-spacing:0.78px">Kuphal, Krajcik and Pfeffer</div>
<div class="tx tb" style="left:493px;top:144px;line-height:22px;font-size:16.5px;color:#1f6bc4;letter-spacing:0.78px">Desktop</div>
<div class="tx tb" style="left:622px;top:144px;line-height:22px;font-size:16.5px;color:#1f6bc4;letter-spacing:0.78px">Failure</div>
<div class="tx tb" style="left:817px;top:144px;line-height:22px;font-size:16.5px;color:#1f6bc4;letter-spacing:0.78px">Partenstein</div>
<div class="tx tb" style="left:1050px;top:144px;line-height:22px;font-size:16.5px;color:#1f6bc4;letter-spacing:0.78px"></div>
<div class="tx tb" style="left:1099px;top:144px;line-height:22px;font-size:16.5px;color:#1f6bc4;letter-spacing:0.78px">Germany</div>
<div class="tx tb" style="left:1276px;top:144px;line-height:22px;font-size:16.5px;color:#1f6bc4;letter-spacing:0.78px">E</div>
<div class="abs" style="left:0px;top:168px;width:192px;height:29px;background:#fff;border-top:1px solid #4a8ae0;"></div>
<div class="abs" style="left:193px;top:168px;width:293px;height:29px;background:#fff;border-top:1px solid #4a8ae0;"></div>
<div class="abs" style="left:487px;top:168px;width:128px;height:29px;background:#fff;border-top:1px solid #4a8ae0;"></div>
<div class="abs" style="left:616px;top:168px;width:194px;height:29px;background:#fff;border-top:1px solid #4a8ae0;"></div>
<div class="abs" style="left:811px;top:168px;width:232px;height:29px;background:#fff;border-top:1px solid #4a8ae0;"></div>
<div class="abs" style="left:1044px;top:168px;width:48px;height:29px;background:#fff;border-top:1px solid #4a8ae0;"></div>
<div class="abs" style="left:1093px;top:168px;width:176px;height:29px;background:#fff;border-top:1px solid #4a8ae0;"></div>
<div class="abs" style="left:1270px;top:168px;width:16px;height:29px;background:#fff;border-top:1px solid #4a8ae0;"></div>
<div class="tx tb" style="left:6px;top:171px;line-height:22px;font-size:16.5px;color:#0c3f7a;letter-spacing:0.78px">Abbigail Toy II</div>
<div class="tx tb" style="left:199px;top:171px;line-height:22px;font-size:16.5px;color:#0c3f7a;letter-spacing:0.78px">Brown, Morissette and Kohler</div>
<div class="tx tb" style="left:493px;top:171px;line-height:22px;font-size:16.5px;color:#0c3f7a;letter-spacing:0.78px">Mobile</div>
<div class="tx tb" style="left:622px;top:171px;line-height:22px;font-size:16.5px;color:#0c3f7a;letter-spacing:0.78px">Failure</div>
<div class="tx tb" style="left:817px;top:171px;line-height:22px;font-size:16.5px;color:#0c3f7a;letter-spacing:0.78px">Wesendorf</div>
<div class="tx tb" style="left:1050px;top:171px;line-height:22px;font-size:16.5px;color:#0c3f7a;letter-spacing:0.78px"></div>
<div class="tx tb" style="left:1099px;top:171px;line-height:22px;font-size:16.5px;color:#0c3f7a;letter-spacing:0.78px">Germany</div>
<div class="tx tb" style="left:1276px;top:171px;line-height:22px;font-size:16.5px;color:#0c3f7a;letter-spacing:0.78px">L</div>
<div class="abs" style="left:0px;top:196px;width:192px;height:28px;background:#e6e6e6;border-top:1px solid #4a8ae0;"></div>
<div class="abs" style="left:193px;top:196px;width:293px;height:28px;background:#e6e6e6;border-top:1px solid #4a8ae0;"></div>
<div class="abs" style="left:487px;top:196px;width:128px;height:28px;background:#e6e6e6;border-top:1px solid #4a8ae0;"></div>
<div class="abs" style="left:616px;top:196px;width:194px;height:28px;background:#e6e6e6;border-top:1px solid #4a8ae0;"></div>
<div class="abs" style="left:811px;top:196px;width:232px;height:28px;background:#e6e6e6;border-top:1px solid #4a8ae0;"></div>
<div class="abs" style="left:1044px;top:196px;width:48px;height:28px;background:#e6e6e6;border-top:1px solid #4a8ae0;"></div>
<div class="abs" style="left:1093px;top:196px;width:176px;height:28px;background:#e6e6e6;border-top:1px solid #4a8ae0;"></div>
<div class="abs" style="left:1270px;top:196px;width:16px;height:28px;background:#e6e6e6;border-top:1px solid #4a8ae0;"></div>
<div class="tx tb" style="left:6px;top:199px;line-height:22px;font-size:16.5px;color:#1f6bc4;letter-spacing:0.78px">Abbigail Toy II</div>
<div class="tx tb" style="left:199px;top:199px;line-height:22px;font-size:16.5px;color:#1f6bc4;letter-spacing:0.78px">Goldner, Spencer and Homenick</div>
<div class="tx tb" style="left:493px;top:199px;line-height:22px;font-size:16.5px;color:#1f6bc4;letter-spacing:0.78px">Desktop</div>
<div class="tx tb" style="left:622px;top:199px;line-height:22px;font-size:16.5px;color:#1f6bc4;letter-spacing:0.78px">Success</div>
<div class="tx tb" style="left:817px;top:199px;line-height:22px;font-size:16.5px;color:#1f6bc4;letter-spacing:0.78px">Fennpfuhl</div>
<div class="tx tb" style="left:1050px;top:199px;line-height:22px;font-size:16.5px;color:#1f6bc4;letter-spacing:0.78px"></div>
<div class="tx tb" style="left:1099px;top:199px;line-height:22px;font-size:16.5px;color:#1f6bc4;letter-spacing:0.78px">Germany</div>
<div class="tx tb" style="left:1276px;top:199px;line-height:22px;font-size:16.5px;color:#1f6bc4;letter-spacing:0.78px">C</div>
<div class="abs" style="left:0px;top:223px;width:192px;height:30px;background:#fff;border-top:1px solid #4a8ae0;"></div>
<div class="abs" style="left:193px;top:223px;width:293px;height:30px;background:#fff;border-top:1px solid #4a8ae0;"></div>
<div class="abs" style="left:487px;top:223px;width:128px;height:30px;background:#fff;border-top:1px solid #4a8ae0;"></div>
<div class="abs" style="left:616px;top:223px;width:194px;height:30px;background:#fff;border-top:1px solid #4a8ae0;"></div>
<div class="abs" style="left:811px;top:223px;width:232px;height:30px;background:#fff;border-top:1px solid #4a8ae0;"></div>
<div class="abs" style="left:1044px;top:223px;width:48px;height:30px;background:#fff;border-top:1px solid #4a8ae0;"></div>
<div class="abs" style="left:1093px;top:223px;width:176px;height:30px;background:#fff;border-top:1px solid #4a8ae0;"></div>
<div class="abs" style="left:1270px;top:223px;width:16px;height:30px;background:#fff;border-top:1px solid #4a8ae0;"></div>
<div class="tx tb" style="left:6px;top:226px;line-height:22px;font-size:16.5px;color:#0c3f7a;letter-spacing:0.78px">Abbigail Toy II</div>
<div class="tx tb" style="left:199px;top:226px;line-height:22px;font-size:16.5px;color:#0c3f7a;letter-spacing:0.78px">Kirlin - Nitzsche</div>
<div class="tx tb" style="left:493px;top:226px;line-height:22px;font-size:16.5px;color:#0c3f7a;letter-spacing:0.78px">Web</div>
<div class="tx tb" style="left:622px;top:226px;line-height:22px;font-size:16.5px;color:#0c3f7a;letter-spacing:0.78px">Success</div>
<div class="tx tb" style="left:817px;top:226px;line-height:22px;font-size:16.5px;color:#0c3f7a;letter-spacing:0.78px">Eschen</div>
<div class="tx tb" style="left:1050px;top:226px;line-height:22px;font-size:16.5px;color:#0c3f7a;letter-spacing:0.78px"></div>
<div class="tx tb" style="left:1099px;top:226px;line-height:22px;font-size:16.5px;color:#0c3f7a;letter-spacing:0.78px">Liechtenstein</div>
<div class="tx tb" style="left:1276px;top:226px;line-height:22px;font-size:16.5px;color:#0c3f7a;letter-spacing:0.78px">E</div>
<div class="abs" style="left:0px;top:251px;width:192px;height:1.5px;background:#5a95e4"></div>
<div class="abs" style="left:0px;top:252.5px;width:192px;height:3px;background:#e6e6e6"></div>
<div class="abs" style="left:193px;top:251px;width:293px;height:1.5px;background:#5a95e4"></div>
<div class="abs" style="left:193px;top:252.5px;width:293px;height:3px;background:#e6e6e6"></div>
<div class="abs" style="left:487px;top:251px;width:128px;height:1.5px;background:#5a95e4"></div>
<div class="abs" style="left:487px;top:252.5px;width:128px;height:3px;background:#e6e6e6"></div>
<div class="abs" style="left:616px;top:251px;width:194px;height:1.5px;background:#5a95e4"></div>
<div class="abs" style="left:616px;top:252.5px;width:194px;height:3px;background:#e6e6e6"></div>
<div class="abs" style="left:811px;top:251px;width:232px;height:1.5px;background:#5a95e4"></div>
<div class="abs" style="left:811px;top:252.5px;width:232px;height:3px;background:#e6e6e6"></div>
<div class="abs" style="left:1044px;top:251px;width:48px;height:1.5px;background:#5a95e4"></div>
<div class="abs" style="left:1044px;top:252.5px;width:48px;height:3px;background:#e6e6e6"></div>
<div class="abs" style="left:1093px;top:251px;width:176px;height:1.5px;background:#5a95e4"></div>
<div class="abs" style="left:1093px;top:252.5px;width:176px;height:3px;background:#e6e6e6"></div>
<div class="abs" style="left:1270px;top:251px;width:16px;height:1.5px;background:#5a95e4"></div>
<div class="abs" style="left:1270px;top:252.5px;width:16px;height:3px;background:#e6e6e6"></div>
</div>
<div class="abs" style="left:256px;top:903px;width:509px;height:8px;border-radius:4px;background:#ababab"></div>
<div class="abs" style="left:1541px;top:609px;width:9px;height:9px;border-radius:50%;background:#b3b3b3"></div>
<div class="card" style="left:1565px;top:555px;width:312px;height:355px;"><div class="ttl" style="top:0;height:40px;line-height:38px;">Column Selector</div>
<div class="abs" style="left:12px;top:53px;width:16px;height:16px;background:#252525"></div>
<div class="tx" style="left:38px;top:51px;line-height:22px;font-size:17px;color:#1d5c9c;letter-spacing:0.3px">Select all</div>
<div class="abs" style="left:12px;top:83px;width:16px;height:16px;background:#252525"></div>
<div class="tx" style="left:38px;top:81px;line-height:22px;font-size:17px;color:#1d5c9c;letter-spacing:0.3px">App Display Name</div>
<div class="abs" style="left:12px;top:113px;width:16px;height:16px;background:#252525"></div>
<div class="tx" style="left:38px;top:111px;line-height:22px;font-size:17px;color:#1d5c9c;letter-spacing:0.3px">Client App Used</div>
<div class="abs" style="left:12px;top:143px;width:16px;height:16px;background:#252525"></div>
<div class="tx" style="left:38px;top:141px;line-height:22px;font-size:17px;color:#1d5c9c;letter-spacing:0.3px">Conditional Access Status</div>
<div class="abs" style="left:12px;top:173px;width:16px;height:16px;background:#252525"></div>
<div class="tx" style="left:38px;top:171px;line-height:22px;font-size:17px;color:#1d5c9c;letter-spacing:0.3px">City</div>
<div class="abs" style="left:12px;top:203px;width:16px;height:16px;background:#252525"></div>
<div class="tx" style="left:38px;top:201px;line-height:22px;font-size:17px;color:#1d5c9c;letter-spacing:0.3px">State</div>
<div class="abs" style="left:12px;top:233px;width:16px;height:16px;background:#252525"></div>
<div class="tx" style="left:38px;top:231px;line-height:22px;font-size:17px;color:#1d5c9c;letter-spacing:0.3px">Country</div>
<div class="abs" style="left:12px;top:263px;width:16px;height:16px;background:#252525"></div>
<div class="tx" style="left:38px;top:261px;line-height:22px;font-size:17px;color:#1d5c9c;letter-spacing:0.3px">Resource Display Name</div>
<div class="abs" style="left:12px;top:294px;width:16px;height:16px;background:#252525"></div>
<div class="tx" style="left:38px;top:292px;line-height:22px;font-size:17px;color:#1d5c9c;letter-spacing:0.3px">Sign-In Status</div>
<div class="abs" style="left:12px;top:324px;width:16px;height:16px;background:#252525"></div>
<div class="tx" style="left:38px;top:322px;line-height:22px;font-size:17px;color:#1d5c9c;letter-spacing:0.3px">Status Details</div>
<div class="abs" style="left:298px;top:46px;width:10px;height:280px;background:#8a8a8a"></div>
</div>
</body></html>
